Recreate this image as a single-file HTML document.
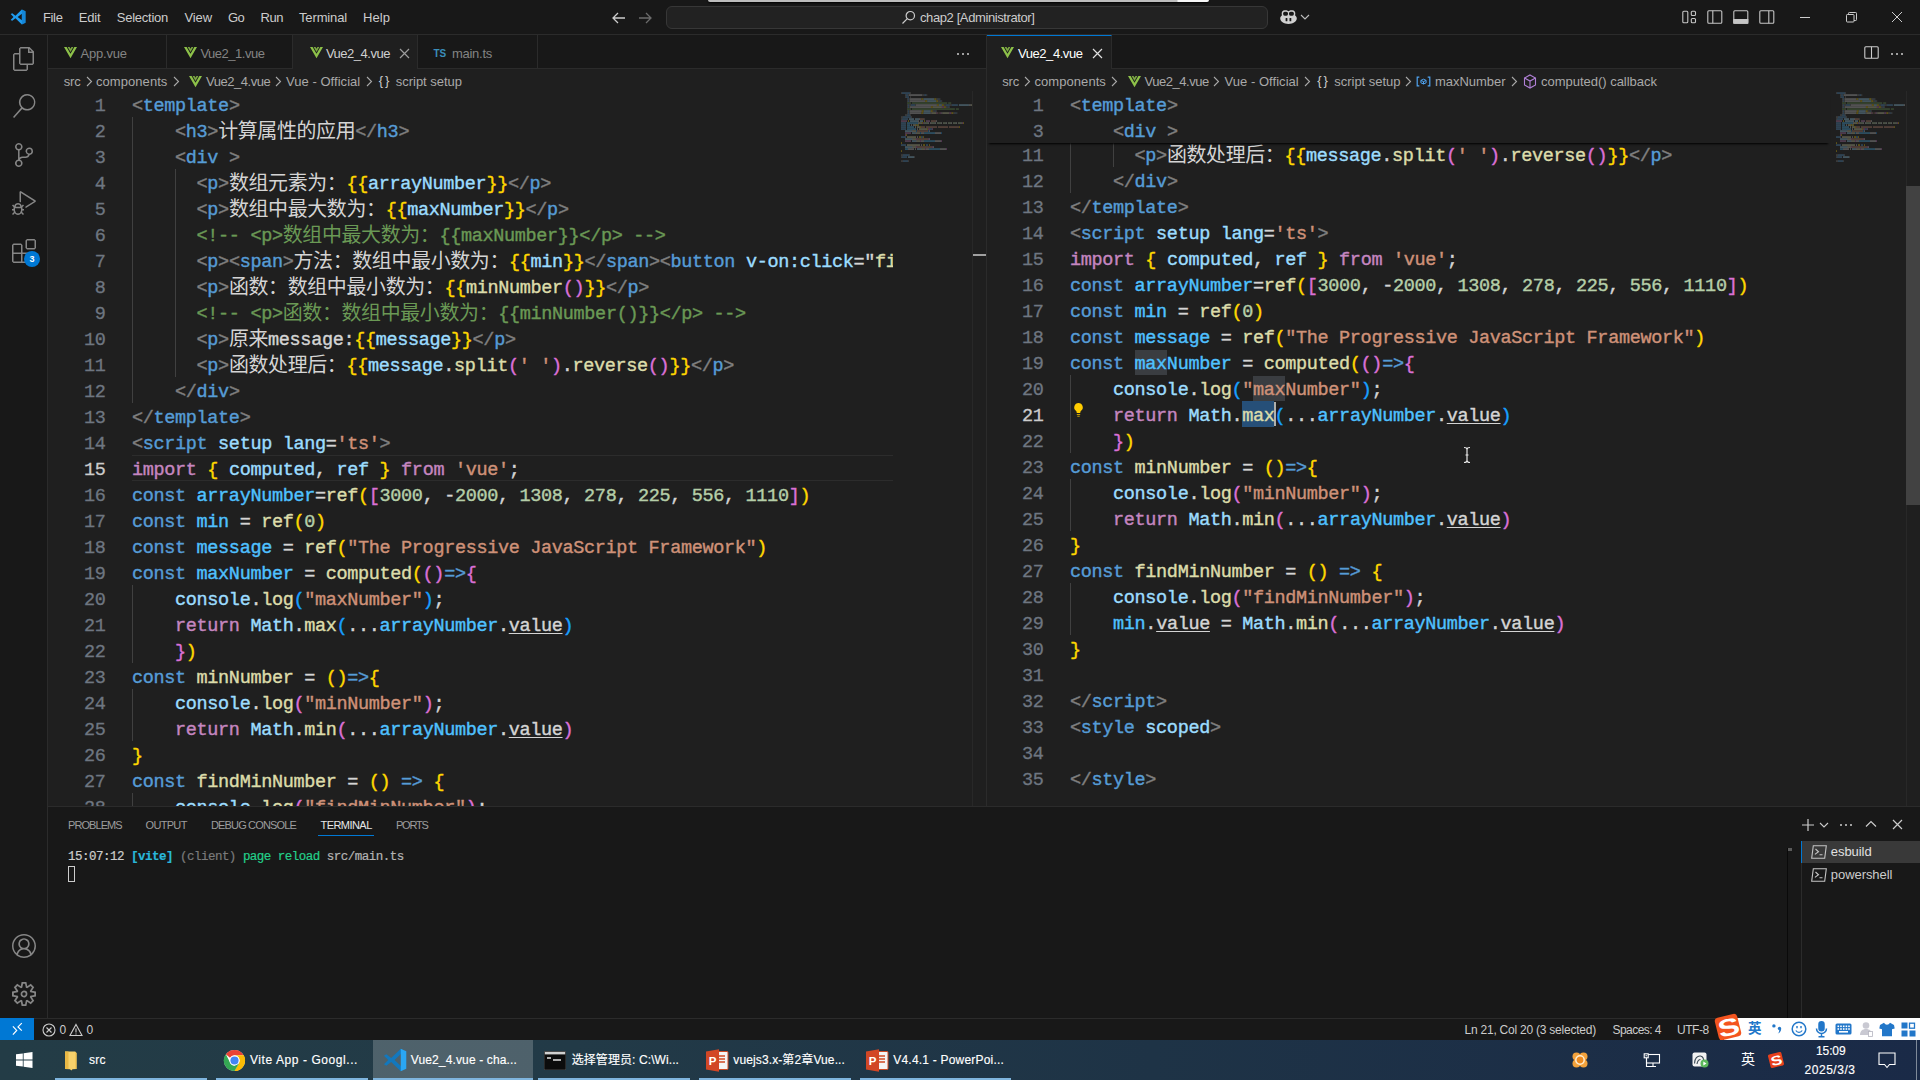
<!DOCTYPE html>
<html lang="en"><head><meta charset="utf-8"><title>Vue2_4.vue - chap2 - Visual Studio Code</title>
<style>
*{box-sizing:border-box}
html,body{margin:0;padding:0}
body{width:1920px;height:1080px;overflow:hidden;position:relative;background:#181818;font-family:"Liberation Sans","Noto Sans CJK SC",sans-serif;font-size:13px;color:#ccc}
body>div,body>svg,body>span{position:absolute}
.x{white-space:pre;display:block}
.cl{position:absolute;height:26px;line-height:31px;-webkit-text-stroke:.4px;white-space:pre;font-family:"Liberation Mono","Noto Sans CJK SC",monospace;font-size:18.5px;letter-spacing:-.34px;color:#d4d4d4}
.ln{position:absolute;height:26px;line-height:31px;-webkit-text-stroke:.3px;text-align:right;font-family:"Liberation Mono",monospace;font-size:18.5px;letter-spacing:-.34px;color:#6e7681;width:60px}
.z{font-size:19.94px;font-family:"Liberation Mono","Noto Sans CJK SC",monospace;line-height:0;position:relative;top:.5px;-webkit-text-stroke:0}
.g{color:#808080}.t{color:#569cd6}.a{color:#9cdcfe}.s{color:#ce9178}.w{color:#d4d4d4}.c{color:#6a9955}
.k{color:#c586c0}.f{color:#dcdcaa}.n{color:#b5cea8}.v{color:#4fc1ff}.y{color:#ffd700}.p{color:#da70d6}.b{color:#179fff}
.u{color:#d4d4d4;text-decoration:underline;text-underline-offset:2px}
.ed{overflow:hidden;background:#1f1f1f}
.ed>*{position:absolute}

</style></head>
<body>
<div style="left:0px;top:0px;width:1920px;height:35px;background:#181818;border-bottom:1px solid #2b2b2b;"></div>
<div style="left:708px;top:0px;width:501px;height:2px;background:linear-gradient(90deg,#bdbdbd 0,#bdbdbd 469px,#f6f6f6 470px);border-radius:0 0 3px 3px;box-shadow:0 1px 2px #000;"></div>
<svg style="left:10px;top:9px" width="16" height="16" viewBox="0 0 100 100"><path fill="#1f9cf0" fill-rule="evenodd" d="M74 3 L97 14 V86 L74 97 L34 58 L14 74 L4 68 L22 50 L4 32 L14 26 L34 42 Z M74 30 L48 50 L74 70 Z"/><path fill="#0b74c4" d="M74 3 L97 14 V86 L74 97 Z" opacity=".55"/></svg>
<span class="x" style="left:43px;top:7.5px;height:20px;line-height:20px;font-size:13px;color:#cccccc;letter-spacing:-0.363px;">File</span>
<span class="x" style="left:78.75px;top:7.5px;height:20px;line-height:20px;font-size:13px;color:#cccccc;letter-spacing:-0.164px;">Edit</span>
<span class="x" style="left:116.75px;top:7.5px;height:20px;line-height:20px;font-size:13px;color:#cccccc;letter-spacing:-0.248px;">Selection</span>
<span class="x" style="left:184.5px;top:7.5px;height:20px;line-height:20px;font-size:13px;color:#cccccc;letter-spacing:-0.113px;">View</span>
<span class="x" style="left:228px;top:7.5px;height:20px;line-height:20px;font-size:13px;color:#cccccc;letter-spacing:-0.672px;">Go</span>
<span class="x" style="left:260.5px;top:7.5px;height:20px;line-height:20px;font-size:13px;color:#cccccc;letter-spacing:-0.453px;">Run</span>
<span class="x" style="left:299px;top:7.5px;height:20px;line-height:20px;font-size:13px;color:#cccccc;letter-spacing:-0.141px;">Terminal</span>
<span class="x" style="left:363px;top:7.5px;height:20px;line-height:20px;font-size:13px;color:#cccccc;letter-spacing:0.062px;">Help</span>
<svg style="left:610px;top:9px" width="18" height="18" viewBox="0 0 18 18" fill="none" stroke="#cccccc" stroke-width="1.3"><path d="M15 9H3.5M8 4 3 9l5 5"/></svg>
<svg style="left:636px;top:9px" width="18" height="18" viewBox="0 0 18 18" fill="none" stroke="#6b6b6b" stroke-width="1.3"><path d="M3 9h11.5M10 4l5 5-5 5"/></svg>
<div style="left:666px;top:6px;width:602px;height:23px;background:#222222;border:1px solid #373737;border-radius:6px;"></div>
<svg style="left:901px;top:10px" width="15" height="15" viewBox="0 0 15 15" fill="none" stroke="#cccccc" stroke-width="1.2"><circle cx="9.3" cy="5.7" r="4.2"/><path d="M6.3 8.7 1.5 13.5"/></svg>
<span class="x" style="left:920px;top:7.5px;height:20px;line-height:20px;font-size:13px;color:#cccccc;letter-spacing:-0.397px;">chap2 [Administrator]</span>
<svg style="left:1280px;top:10px" width="17" height="14" viewBox="0 0 17 14"><path fill="#d0d0d0" d="M8.500 1.300C7.700.4 6.300 0 4.600.2 2.700.4 1.700 1.600 1.700 3.500c0 .7.100 1.200.3 1.700C.9 6.100.2 7.200.2 8.500.2 11.500 3.900 13.900 8.500 13.900s8.300-2.400 8.300-5.400c0-1.300-.7-2.400-1.800-3.300.2-.5.300-1 .3-1.700 0-1.900-1-3.100-2.900-3.300C10.700 0 9.300.4 8.500 1.300z"/><rect x="3.100" y="1.800" width="4.900" height="3.900" rx="1.600" fill="#181818"/><rect x="9" y="1.800" width="4.900" height="3.900" rx="1.600" fill="#181818"/><rect x="5.600" y="8.100" width="1.800" height="3.200" rx=".5" fill="#181818"/><rect x="9.500" y="8.100" width="1.800" height="3.200" rx=".5" fill="#181818"/></svg>
<svg style="left:1300px;top:13px" width="10" height="8" viewBox="0 0 10 8" fill="none" stroke="#bdbdbd" stroke-width="1.1"><path d="M1 2l4 4 4-4"/></svg>
<svg style="left:1682px;top:10px" width="16" height="14" viewBox="0 0 16 14" fill="none" stroke="#c5c5c5" stroke-width="1.1"><rect x=".8" y="1.300" width="5" height="11.400" rx="1"/><rect x="9.300" y="1.300" width="4.200" height="4.200" rx="1"/><rect x="9.300" y="8.500" width="4.200" height="4.200" rx="1"/></svg>
<svg style="left:1707px;top:10px" width="16" height="14" viewBox="0 0 16 14" fill="none" stroke="#c5c5c5" stroke-width="1.1"><rect x=".8" y=".8" width="14" height="12.400" rx="1"/><path d="M5.800.8v12.400"/></svg>
<svg style="left:1733px;top:10px" width="16" height="14" viewBox="0 0 16 14" fill="none" stroke="#c5c5c5" stroke-width="1.1"><rect x=".8" y=".8" width="14" height="12.400" rx="1"/><path d="M.8 9.500h14v3.700H.8z" fill="#c5c5c5"/></svg>
<svg style="left:1759px;top:10px" width="16" height="14" viewBox="0 0 16 14" fill="none" stroke="#c5c5c5" stroke-width="1.1"><rect x=".8" y=".8" width="14" height="12.400" rx="1"/><path d="M9.800.8v12.400"/></svg>
<div style="left:1800px;top:17px;width:10px;height:1px;background:#cccccc;"></div>
<svg style="left:1845.500px;top:11.500px" width="11" height="11" viewBox="0 0 11 11" fill="none" stroke="#cccccc" stroke-width="1"><rect x=".5" y="2.500" width="7.500" height="7.500" rx=".8"/><path d="M2.500 2.500V1.300a.8.800 0 0 1 .8-.8h6.400a.8.800 0 0 1 .8.800v6.400a.8.800 0 0 1-.8.800H8"/></svg>
<svg style="left:1891px;top:11px" width="12" height="12" viewBox="0 0 12 12" fill="none" stroke="#cccccc" stroke-width="1"><path d="M1 1l10 10M11 1 1 11"/></svg>
<div style="left:0px;top:35px;width:48px;height:983px;background:#181818;border-right:1px solid #2b2b2b;"></div>
<svg style="left:12px;top:47px" width="24" height="24" viewBox="0 0 24 24" fill="#868686"><path d="M17.500 0h-9L7 1.500V6H2.500L1 7.500v15.070L2.500 24h12.070L16 22.570V18h4.700l1.300-1.430V4.500L17.500 0zm0 2.120l2.380 2.380H17.500V2.120zm-3 20.380h-12v-15H7v9.070L8.500 18h6v4.500zm6-6h-12v-15H16V6h4.500v10.500z"/></svg>
<svg style="left:12px;top:94px" width="24" height="24" viewBox="0 0 24 24" fill="#868686"><path d="M15.250 0a8.250 8.250 0 0 0-6.180 13.720L1 22.880l1.120 1.120 8.050-9.120A8.251 8.251 0 1 0 15.250.01V0zm0 15a6.750 6.750 0 1 1 0-13.500 6.750 6.750 0 0 1 0 13.500z"/></svg>
<svg style="left:12px;top:143px" width="24" height="24" viewBox="0 0 24 24" fill="#868686"><path d="M21.007 8.222A3.738 3.738 0 0 0 15.045 5.200a3.737 3.737 0 0 0 1.156 6.583 2.988 2.988 0 0 1-2.668 1.670h-2.990a4.456 4.456 0 0 0-2.989 1.165V7.400a3.737 3.737 0 1 0-1.494 0v9.117a3.776 3.776 0 1 0 1.816.099 2.990 2.990 0 0 1 2.668-1.667h2.990a4.484 4.484 0 0 0 4.223-3.039 3.736 3.736 0 0 0 3.250-3.687zM4.565 3.738a2.242 2.242 0 1 1 4.484 0 2.242 2.242 0 0 1-4.484 0zm4.484 16.441a2.242 2.242 0 1 1-4.484 0 2.242 2.242 0 0 1 4.484 0zm8.221-9.715a2.242 2.242 0 1 1 0-4.485 2.242 2.242 0 0 1 0 4.485z"/></svg>
<svg style="left:12px;top:191px" width="24" height="24" viewBox="0 0 24 24" fill="#868686"><path d="M10.940 13.500l-1.320 1.320a3.730 3.730 0 0 0-7.240 0L1.060 13.500 0 14.560l1.720 1.720-.22.220V18H0v1.500h1.500v.080c.077.489.214.966.410 1.420L0 22.940 1.060 24l1.650-1.650A4.308 4.308 0 0 0 6 24a4.310 4.310 0 0 0 3.290-1.650L10.940 24 12 22.940 10.090 21c.198-.464.336-.951.410-1.450v-.1H12V18h-1.500v-1.500l-.22-.22L12 14.560l-1.060-1.060zM6 13.500a2.250 2.250 0 0 1 2.250 2.250h-4.500A2.250 2.250 0 0 1 6 13.500zm3 6a3.330 3.330 0 0 1-3 3 3.330 3.330 0 0 1-3-3v-2.250h6v2.250zm14.760-9.900v1.260L13.500 17.370V15.600l8.500-5.370L9 2v9.460a5.070 5.070 0 0 0-1.500-.72V.63L8.640 0l15.120 9.600z"/></svg>
<svg style="left:12px;top:239px" width="24" height="24" viewBox="0 0 24 24" fill="#868686"><path d="M13.500 1.500L15 0h7.500L24 1.500V9l-1.500 1.500H15L13.500 9V1.500zm1.500 0V9h7.500V1.500H15zM0 15V6l1.500-1.500H9L10.500 6v7.500H18l1.500 1.500v7.500L18 24H1.500L0 22.500V15zm9-1.500V6H1.500v7.500H9zM9 15H1.500v7.500H9V15zm1.500 7.500H18V15h-7.500v7.500z"/></svg>
<div style="left:24px;top:251px;width:16px;height:16px;background:#0078d4;border-radius:8px;"></div>
<span class="x" style="left:29.5px;top:252.0px;height:14px;line-height:14px;font-size:9px;color:#ffffff;font-weight:bold;">3</span>
<svg style="left:12px;top:934px" width="24" height="24" viewBox="0 0 16 16" fill="#868686"><path d="M16 7.992C16 3.580 12.416 0 8 0S0 3.580 0 7.992c0 2.430 1.104 4.620 2.832 6.090.016.016.032.016.032.032.144.112.288.224.448.336.080.048.144.111.224.175A7.980 7.980 0 0 0 8.016 16a7.980 7.980 0 0 0 4.480-1.375c.080-.048.144-.111.224-.160.144-.111.304-.223.448-.335.016-.016.032-.016.032-.032 1.696-1.487 2.800-3.676 2.800-6.106zm-8 7.001c-1.504 0-2.880-.480-4.016-1.279.016-.128.048-.255.080-.383a4.170 4.170 0 0 1 .416-.991c.176-.304.384-.576.640-.816.240-.240.528-.463.816-.639.304-.176.624-.304.976-.400A4.150 4.150 0 0 1 8 10.342a4.185 4.185 0 0 1 2.928 1.166c.368.368.656.800.864 1.295.112.288.192.592.240.911A7.030 7.030 0 0 1 8 14.993zm-2.448-7.400a2.490 2.490 0 0 1-.208-1.024c0-.351.064-.703.208-1.023.144-.320.336-.607.576-.847.240-.240.528-.431.848-.575.320-.144.672-.208 1.024-.208.368 0 .704.064 1.024.208.320.144.608.336.848.575.240.240.432.528.576.847.144.320.208.672.208 1.023 0 .368-.064.704-.208 1.023a2.840 2.840 0 0 1-.576.848 2.840 2.840 0 0 1-.848.575 2.715 2.715 0 0 1-2.064 0 2.840 2.840 0 0 1-.848-.575 2.526 2.526 0 0 1-.560-.848zm7.424 5.306c0-.032-.016-.048-.016-.080a5.220 5.220 0 0 0-.688-1.406 4.883 4.883 0 0 0-1.088-1.135 5.207 5.207 0 0 0-1.040-.608 2.820 2.820 0 0 0 .464-.383 4.200 4.200 0 0 0 .624-.784 3.624 3.624 0 0 0 .528-1.934 3.710 3.710 0 0 0-.288-1.470 3.799 3.799 0 0 0-.816-1.199 3.845 3.845 0 0 0-1.200-.800 3.720 3.720 0 0 0-1.472-.287 3.720 3.720 0 0 0-1.472.288 3.631 3.631 0 0 0-1.200.815 3.840 3.840 0 0 0-.800 1.199 3.710 3.710 0 0 0-.288 1.470c0 .352.048.688.144 1.007.096.336.224.640.400.927.160.288.384.544.624.784.144.144.304.271.480.383a5.120 5.120 0 0 0-1.040.624c-.416.320-.784.703-1.088 1.119a4.999 4.999 0 0 0-.688 1.406c-.016.032-.016.064-.016.080C1.776 11.636.992 9.910.992 7.992.992 4.140 4.144.991 8 .991s7.008 3.149 7.008 7.001a6.960 6.960 0 0 1-2.032 4.907z"/></svg>
<svg style="left:12px;top:982px" width="24" height="24" viewBox="0 0 24 24" fill="#868686" fill-rule="evenodd"><path d="M19.850 8.750l4.150.830v4.840l-4.150.830 2.350 3.520-3.430 3.430-3.520-2.350-.830 4.150H9.580l-.830-4.150-3.520 2.350-3.430-3.430 2.350-3.520L0 14.420V9.580l4.150-.830L1.800 5.230 5.230 1.800l3.520 2.350L9.580 0h4.840l.830 4.150 3.520-2.350 3.430 3.430-2.350 3.520zm-1.570 5.070l4-.810v-2l-4-.810-.540-1.300 2.290-3.430-1.430-1.430-3.430 2.290-1.300-.540-.810-4h-2l-.810 4-1.300.540-3.430-2.290-1.430 1.430L6.380 8.900l-.540 1.300-4 .810v2l4 .810.540 1.300-2.290 3.430 1.430 1.430 3.430-2.290 1.300.540.810 4h2l.810-4 1.300-.540 3.430 2.290 1.430-1.430-2.290-3.430.540-1.300zm-8.186-4.672A3.430 3.430 0 0 1 12 8.570 3.440 3.440 0 0 1 15.430 12a3.430 3.430 0 1 1-5.336-2.852zm.956 4.274c.281.188.612.288.950.288A1.700 1.700 0 0 0 13.710 12a1.710 1.710 0 1 0-2.660 1.422z"/></svg>
<div style="left:48px;top:35px;width:938px;height:34px;background:#181818;border-bottom:1px solid #2b2b2b;"></div>
<div style="left:48px;top:35px;width:119px;height:34px;background:#181818;border-right:1px solid #2b2b2b;border-bottom:1px solid #2b2b2b;"></div>
<svg style="left:63.5px;top:46px" width="13" height="13" viewBox="0 0 24 22"><path fill="#8dc149" d="M0 1h4.800L12 13.500 19.200 1H24L12 21.500z"/><path fill="#8dc149" d="M6.800 1h3.400L12 4.300 13.800 1h3.400L12 10z" opacity=".85"/></svg>
<span class="x" style="left:80.6px;top:43.5px;height:20px;line-height:20px;font-size:13px;color:#848484;letter-spacing:-0.229px;">App.vue</span>
<div style="left:167px;top:35px;width:126px;height:34px;background:#181818;border-right:1px solid #2b2b2b;border-bottom:1px solid #2b2b2b;"></div>
<svg style="left:183.5px;top:46px" width="13" height="13" viewBox="0 0 24 22"><path fill="#8dc149" d="M0 1h4.800L12 13.500 19.200 1H24L12 21.500z"/><path fill="#8dc149" d="M6.800 1h3.400L12 4.300 13.800 1h3.400L12 10z" opacity=".85"/></svg>
<span class="x" style="left:200.4px;top:43.5px;height:20px;line-height:20px;font-size:13px;color:#848484;letter-spacing:-0.492px;">Vue2_1.vue</span>
<div style="left:293px;top:35px;width:125px;height:34px;background:#1f1f1f;border-right:1px solid #2b2b2b;"></div>
<svg style="left:309.5px;top:46px" width="13" height="13" viewBox="0 0 24 22"><path fill="#8dc149" d="M0 1h4.800L12 13.500 19.200 1H24L12 21.500z"/><path fill="#8dc149" d="M6.800 1h3.400L12 4.300 13.800 1h3.400L12 10z" opacity=".85"/></svg>
<span class="x" style="left:325.9px;top:43.5px;height:20px;line-height:20px;font-size:13px;color:#cfcfcf;letter-spacing:-0.482px;">Vue2_4.vue</span>
<div style="left:418px;top:35px;width:120px;height:34px;background:#181818;border-right:1px solid #2b2b2b;border-bottom:1px solid #2b2b2b;"></div>
<span class="x" style="left:451.9px;top:43.5px;height:20px;line-height:20px;font-size:13px;color:#848484;letter-spacing:-0.258px;">main.ts</span>
<svg style="left:399px;top:48px" width="11" height="11" viewBox="0 0 11 11" fill="none" stroke="#9d9d9d" stroke-width="1.2"><path d="M1 1l9 9M10 1 1 10"/></svg>
<span class="x" style="left:433.5px;top:45.5px;height:15px;line-height:15px;font-size:10px;color:#3b8eba;font-weight:bold;letter-spacing:-0.141px;">TS</span>
<div style="left:957px;top:52.5px;width:2px;height:2px;background:#cccccc;border-radius:1px;"></div>
<div style="left:962px;top:52.5px;width:2px;height:2px;background:#cccccc;border-radius:1px;"></div>
<div style="left:967px;top:52.5px;width:2px;height:2px;background:#cccccc;border-radius:1px;"></div>
<div style="left:986px;top:35px;width:1px;height:771px;background:#2b2b2b;"></div>
<div style="left:987px;top:35px;width:933px;height:34px;background:#181818;border-bottom:1px solid #2b2b2b;"></div>
<div style="left:987px;top:35px;width:125px;height:34px;background:#1f1f1f;border-top:1px solid #0078d4;border-right:1px solid #2b2b2b;"></div>
<svg style="left:1001.3px;top:45.7px" width="13" height="13" viewBox="0 0 24 22"><path fill="#8dc149" d="M0 1h4.800L12 13.500 19.200 1H24L12 21.500z"/><path fill="#8dc149" d="M6.800 1h3.400L12 4.300 13.800 1h3.400L12 10z" opacity=".85"/></svg>
<span class="x" style="left:1018px;top:43.5px;height:20px;line-height:20px;font-size:13px;color:#ffffff;letter-spacing:-0.442px;">Vue2_4.vue</span>
<svg style="left:1091.5px;top:48px" width="11" height="11" viewBox="0 0 11 11" fill="none" stroke="#e0e0e0" stroke-width="1.2"><path d="M1 1l9 9M10 1 1 10"/></svg>
<svg style="left:1864px;top:46px" width="15" height="13" viewBox="0 0 15 13" fill="none" stroke="#cccccc" stroke-width="1.1"><rect x=".8" y=".8" width="13.400" height="11.400" rx="1"/><path d="M7.500.8v11.400"/></svg>
<div style="left:1891px;top:52.5px;width:2px;height:2px;background:#cccccc;border-radius:1px;"></div>
<div style="left:1896px;top:52.5px;width:2px;height:2px;background:#cccccc;border-radius:1px;"></div>
<div style="left:1901px;top:52.5px;width:2px;height:2px;background:#cccccc;border-radius:1px;"></div>
<div style="left:48px;top:69px;width:938px;height:22px;background:#1f1f1f;"></div>
<div style="left:987px;top:69px;width:933px;height:22px;background:#1f1f1f;"></div>
<span class="x" style="left:63.8px;top:71.5px;height:20px;line-height:20px;font-size:13px;color:#a9a9a9;letter-spacing:-0.181px;">src</span>
<svg style="left:85.5px;top:76px" width="7" height="11" viewBox="0 0 7 11" fill="none" stroke="#a9a9a9" stroke-width="1.1"><path d="M1 1l4.500 4.500L1 10"/></svg>
<span class="x" style="left:96px;top:71.5px;height:20px;line-height:20px;font-size:13px;color:#a9a9a9;letter-spacing:0.057px;">components</span>
<svg style="left:172.5px;top:76px" width="7" height="11" viewBox="0 0 7 11" fill="none" stroke="#a9a9a9" stroke-width="1.1"><path d="M1 1l4.500 4.500L1 10"/></svg>
<svg style="left:189px;top:75px" width="13" height="13" viewBox="0 0 24 22"><path fill="#8dc149" d="M0 1h4.800L12 13.500 19.200 1H24L12 21.500z"/><path fill="#8dc149" d="M6.800 1h3.400L12 4.300 13.800 1h3.400L12 10z" opacity=".85"/></svg>
<span class="x" style="left:205.9px;top:71.5px;height:20px;line-height:20px;font-size:13px;color:#a9a9a9;letter-spacing:-0.442px;">Vue2_4.vue</span>
<svg style="left:274.5px;top:76px" width="7" height="11" viewBox="0 0 7 11" fill="none" stroke="#a9a9a9" stroke-width="1.1"><path d="M1 1l4.500 4.500L1 10"/></svg>
<span class="x" style="left:286px;top:71.5px;height:20px;line-height:20px;font-size:13px;color:#a9a9a9;letter-spacing:0.043px;">Vue - Official</span>
<svg style="left:365.5px;top:76px" width="7" height="11" viewBox="0 0 7 11" fill="none" stroke="#a9a9a9" stroke-width="1.1"><path d="M1 1l4.500 4.500L1 10"/></svg>
<span class="x" style="left:378.8px;top:71.0px;height:20px;line-height:20px;font-size:13px;color:#cccccc;letter-spacing:1.756px;">{}</span>
<span class="x" style="left:395.8px;top:71.5px;height:20px;line-height:20px;font-size:13px;color:#a9a9a9;letter-spacing:-0.024px;">script setup</span>
<span class="x" style="left:1002.3px;top:71.5px;height:20px;line-height:20px;font-size:13px;color:#a9a9a9;letter-spacing:-0.181px;">src</span>
<svg style="left:1024.0px;top:76px" width="7" height="11" viewBox="0 0 7 11" fill="none" stroke="#a9a9a9" stroke-width="1.1"><path d="M1 1l4.500 4.500L1 10"/></svg>
<span class="x" style="left:1034.5px;top:71.5px;height:20px;line-height:20px;font-size:13px;color:#a9a9a9;letter-spacing:0.057px;">components</span>
<svg style="left:1111.0px;top:76px" width="7" height="11" viewBox="0 0 7 11" fill="none" stroke="#a9a9a9" stroke-width="1.1"><path d="M1 1l4.500 4.500L1 10"/></svg>
<svg style="left:1127.5px;top:75px" width="13" height="13" viewBox="0 0 24 22"><path fill="#8dc149" d="M0 1h4.800L12 13.500 19.200 1H24L12 21.500z"/><path fill="#8dc149" d="M6.800 1h3.400L12 4.300 13.800 1h3.400L12 10z" opacity=".85"/></svg>
<span class="x" style="left:1144.4px;top:71.5px;height:20px;line-height:20px;font-size:13px;color:#a9a9a9;letter-spacing:-0.442px;">Vue2_4.vue</span>
<svg style="left:1213.0px;top:76px" width="7" height="11" viewBox="0 0 7 11" fill="none" stroke="#a9a9a9" stroke-width="1.1"><path d="M1 1l4.500 4.500L1 10"/></svg>
<span class="x" style="left:1224.5px;top:71.5px;height:20px;line-height:20px;font-size:13px;color:#a9a9a9;letter-spacing:0.043px;">Vue - Official</span>
<svg style="left:1304.0px;top:76px" width="7" height="11" viewBox="0 0 7 11" fill="none" stroke="#a9a9a9" stroke-width="1.1"><path d="M1 1l4.500 4.500L1 10"/></svg>
<span class="x" style="left:1317.3px;top:71.0px;height:20px;line-height:20px;font-size:13px;color:#cccccc;letter-spacing:1.756px;">{}</span>
<span class="x" style="left:1334.3px;top:71.5px;height:20px;line-height:20px;font-size:13px;color:#a9a9a9;letter-spacing:-0.024px;">script setup</span>
<svg style="left:1404.5px;top:76px" width="7" height="11" viewBox="0 0 7 11" fill="none" stroke="#a9a9a9" stroke-width="1.1"><path d="M1 1l4.500 4.500L1 10"/></svg>
<svg style="left:1416px;top:75px" width="15" height="13" viewBox="0 0 15 13" fill="none" stroke="#4fa3f0" stroke-width="1.200"><path d="M3.300 2.200H1.200v8.600h2.100M11.700 2.200h2.100v8.600h-2.100"/><path d="M7.500 4.200l2.600 1.200v2.400L7.500 9 4.900 7.800V5.400z M4.900 5.400l2.600 1.200 2.600-1.200M7.500 6.600V9" stroke-width="1"/></svg>
<span class="x" style="left:1435px;top:71.5px;height:20px;line-height:20px;font-size:13px;color:#a9a9a9;letter-spacing:-0.033px;">maxNumber</span>
<svg style="left:1510.5px;top:76px" width="7" height="11" viewBox="0 0 7 11" fill="none" stroke="#a9a9a9" stroke-width="1.1"><path d="M1 1l4.500 4.500L1 10"/></svg>
<svg style="left:1523px;top:74px" width="14" height="15" viewBox="0 0 14 15" fill="none" stroke="#b180d7" stroke-width="1.1"><path d="M7 1l5.500 3v7L7 14l-5.500-3V4z"/><path d="M1.500 4 7 7l5.500-3M7 7v7"/></svg>
<span class="x" style="left:1541px;top:71.5px;height:20px;line-height:20px;font-size:13px;color:#a9a9a9;letter-spacing:-0.017px;">computed() callback</span>
<div class="ed" style="left:48px;top:91px;width:845px;height:715px">
<div style="left:84px;top:364px;width:761px;height:26px;border-top:1px solid #2c2c2c;border-bottom:1px solid #2c2c2c"></div>
<div style="left:84px;top:26px;width:1px;height:286px;background:#404040"></div>
<div style="left:127px;top:78px;width:1px;height:208px;background:#404040"></div>
<div style="left:84px;top:494px;width:1px;height:78px;background:#404040"></div>
<div style="left:84px;top:598px;width:1px;height:52px;background:#404040"></div>
<div style="left:84px;top:702px;width:1px;height:52px;background:#404040"></div>
<div class="ln" style="left:-2.5px;top:0px">1</div>
<div class="cl" style="left:84px;top:0px"><span class="g">&lt;</span><span class="t">template</span><span class="g">&gt;</span></div>
<div class="ln" style="left:-2.5px;top:26px">2</div>
<div class="cl" style="left:84px;top:26px">    <span class="g">&lt;</span><span class="t">h3</span><span class="g">&gt;</span><span class="z">计算属性的应用</span><span class="g">&lt;/</span><span class="t">h3</span><span class="g">&gt;</span></div>
<div class="ln" style="left:-2.5px;top:52px">3</div>
<div class="cl" style="left:84px;top:52px">    <span class="g">&lt;</span><span class="t">div</span> <span class="g">&gt;</span></div>
<div class="ln" style="left:-2.5px;top:78px">4</div>
<div class="cl" style="left:84px;top:78px">      <span class="g">&lt;</span><span class="t">p</span><span class="g">&gt;</span><span class="z">数组元素为：</span><span class="y">{{</span><span class="a">arrayNumber</span><span class="y">}}</span><span class="g">&lt;/</span><span class="t">p</span><span class="g">&gt;</span></div>
<div class="ln" style="left:-2.5px;top:104px">5</div>
<div class="cl" style="left:84px;top:104px">      <span class="g">&lt;</span><span class="t">p</span><span class="g">&gt;</span><span class="z">数组中最大数为：</span><span class="y">{{</span><span class="a">maxNumber</span><span class="y">}}</span><span class="g">&lt;/</span><span class="t">p</span><span class="g">&gt;</span></div>
<div class="ln" style="left:-2.5px;top:130px">6</div>
<div class="cl" style="left:84px;top:130px">      <span class="c">&lt;!-- &lt;p&gt;<span class="z">数组中最大数为：</span>{{maxNumber}}&lt;/p&gt; --&gt;</span></div>
<div class="ln" style="left:-2.5px;top:156px">7</div>
<div class="cl" style="left:84px;top:156px">      <span class="g">&lt;</span><span class="t">p</span><span class="g">&gt;</span><span class="g">&lt;</span><span class="t">span</span><span class="g">&gt;</span><span class="z">方法：数组中最小数为：</span><span class="y">{{</span><span class="a">min</span><span class="y">}}</span><span class="g">&lt;/</span><span class="t">span</span><span class="g">&gt;</span><span class="g">&lt;</span><span class="t">button</span> <span class="a">v-on:click</span>="<span class="f">findMinNumber</span>"&gt;</div>
<div class="ln" style="left:-2.5px;top:182px">8</div>
<div class="cl" style="left:84px;top:182px">      <span class="g">&lt;</span><span class="t">p</span><span class="g">&gt;</span><span class="z">函数：数组中最小数为：</span><span class="y">{{</span><span class="f">minNumber</span><span class="p">()</span><span class="y">}}</span><span class="g">&lt;/</span><span class="t">p</span><span class="g">&gt;</span></div>
<div class="ln" style="left:-2.5px;top:208px">9</div>
<div class="cl" style="left:84px;top:208px">      <span class="c">&lt;!-- &lt;p&gt;<span class="z">函数：数组中最小数为：</span>{{minNumber()}}&lt;/p&gt; --&gt;</span></div>
<div class="ln" style="left:-2.5px;top:234px">10</div>
<div class="cl" style="left:84px;top:234px">      <span class="g">&lt;</span><span class="t">p</span><span class="g">&gt;</span><span class="z">原来</span>message:<span class="y">{{</span><span class="a">message</span><span class="y">}}</span><span class="g">&lt;/</span><span class="t">p</span><span class="g">&gt;</span></div>
<div class="ln" style="left:-2.5px;top:260px">11</div>
<div class="cl" style="left:84px;top:260px">      <span class="g">&lt;</span><span class="t">p</span><span class="g">&gt;</span><span class="z">函数处理后：</span><span class="y">{{</span><span class="a">message</span>.<span class="f">split</span><span class="p">(</span><span class="s">' '</span><span class="p">)</span>.<span class="f">reverse</span><span class="p">()</span><span class="y">}}</span><span class="g">&lt;/</span><span class="t">p</span><span class="g">&gt;</span></div>
<div class="ln" style="left:-2.5px;top:286px">12</div>
<div class="cl" style="left:84px;top:286px">    <span class="g">&lt;/</span><span class="t">div</span><span class="g">&gt;</span></div>
<div class="ln" style="left:-2.5px;top:312px">13</div>
<div class="cl" style="left:84px;top:312px"><span class="g">&lt;/</span><span class="t">template</span><span class="g">&gt;</span></div>
<div class="ln" style="left:-2.5px;top:338px">14</div>
<div class="cl" style="left:84px;top:338px"><span class="g">&lt;</span><span class="t">script</span> <span class="a">setup</span> <span class="a">lang</span>=<span class="s">'ts'</span><span class="g">&gt;</span></div>
<div class="ln" style="left:-2.5px;top:364px;color:#cccccc">15</div>
<div class="cl" style="left:84px;top:364px"><span class="k">import</span> <span class="y">{</span> <span class="a">computed</span>, <span class="a">ref</span> <span class="y">}</span> <span class="k">from</span> <span class="s">'vue'</span>;</div>
<div class="ln" style="left:-2.5px;top:390px">16</div>
<div class="cl" style="left:84px;top:390px"><span class="t">const</span> <span class="v">arrayNumber</span>=<span class="f">ref</span><span class="y">(</span><span class="p">[</span><span class="n">3000</span>, -<span class="n">2000</span>, <span class="n">1308</span>, <span class="n">278</span>, <span class="n">225</span>, <span class="n">556</span>, <span class="n">1110</span><span class="p">]</span><span class="y">)</span></div>
<div class="ln" style="left:-2.5px;top:416px">17</div>
<div class="cl" style="left:84px;top:416px"><span class="t">const</span> <span class="v">min</span> = <span class="f">ref</span><span class="y">(</span><span class="n">0</span><span class="y">)</span></div>
<div class="ln" style="left:-2.5px;top:442px">18</div>
<div class="cl" style="left:84px;top:442px"><span class="t">const</span> <span class="v">message</span> = <span class="f">ref</span><span class="y">(</span><span class="s">"The Progressive JavaScript Framework"</span><span class="y">)</span></div>
<div class="ln" style="left:-2.5px;top:468px">19</div>
<div class="cl" style="left:84px;top:468px"><span class="t">const</span> <span class="v">maxNumber</span> = <span class="f">computed</span><span class="y">(</span><span class="p">()</span><span class="t">=&gt;</span><span class="p">{</span></div>
<div class="ln" style="left:-2.5px;top:494px">20</div>
<div class="cl" style="left:84px;top:494px">    <span class="a">console</span>.<span class="f">log</span><span class="b">(</span><span class="s">"maxNumber"</span><span class="b">)</span>;</div>
<div class="ln" style="left:-2.5px;top:520px">21</div>
<div class="cl" style="left:84px;top:520px">    <span class="k">return</span> <span class="a">Math</span>.<span class="f">max</span><span class="b">(</span>...<span class="v">arrayNumber</span>.<span class="u">value</span><span class="b">)</span></div>
<div class="ln" style="left:-2.5px;top:546px">22</div>
<div class="cl" style="left:84px;top:546px">    <span class="p">}</span><span class="y">)</span></div>
<div class="ln" style="left:-2.5px;top:572px">23</div>
<div class="cl" style="left:84px;top:572px"><span class="t">const</span> <span class="f">minNumber</span> = <span class="y">()</span><span class="t">=&gt;</span><span class="y">{</span></div>
<div class="ln" style="left:-2.5px;top:598px">24</div>
<div class="cl" style="left:84px;top:598px">    <span class="a">console</span>.<span class="f">log</span><span class="p">(</span><span class="s">"minNumber"</span><span class="p">)</span>;</div>
<div class="ln" style="left:-2.5px;top:624px">25</div>
<div class="cl" style="left:84px;top:624px">    <span class="k">return</span> <span class="a">Math</span>.<span class="f">min</span><span class="p">(</span>...<span class="v">arrayNumber</span>.<span class="u">value</span><span class="p">)</span></div>
<div class="ln" style="left:-2.5px;top:650px">26</div>
<div class="cl" style="left:84px;top:650px"><span class="y">}</span></div>
<div class="ln" style="left:-2.5px;top:676px">27</div>
<div class="cl" style="left:84px;top:676px"><span class="t">const</span> <span class="f">findMinNumber</span> = <span class="y">()</span> <span class="t">=&gt;</span> <span class="y">{</span></div>
<div class="ln" style="left:-2.5px;top:702px">28</div>
<div class="cl" style="left:84px;top:702px">    <span class="a">console</span>.<span class="f">log</span><span class="p">(</span><span class="s">"findMinNumber"</span><span class="p">)</span>;</div>
</div>
<div style="left:893px;top:91px;width:93px;height:715px;background:#1f1f1f;"></div>
<div class="ed" style="left:987px;top:91px;width:843px;height:715px">
<div style="left:147.6px;top:259px;width:32.3px;height:25px;background:#3a3d41"></div><div style="left:265.9px;top:285px;width:32.3px;height:25px;background:#3a3d41"></div><div style="left:255.2px;top:310px;width:32.3px;height:26px;background:#264f78"></div><div style="left:287.4px;top:311px;width:2px;height:24px;background:#aeafad"></div>
<div style="left:83px;top:50px;width:1px;height:52px;background:#404040"></div>
<div style="left:126px;top:50px;width:1px;height:26px;background:#404040"></div>
<div style="left:83px;top:284px;width:1px;height:78px;background:#404040"></div>
<div style="left:83px;top:388px;width:1px;height:52px;background:#404040"></div>
<div style="left:83px;top:492px;width:1px;height:52px;background:#404040"></div>
<div class="ln" style="left:-3.5px;top:50px">11</div>
<div class="cl" style="left:83px;top:50px">      <span class="g">&lt;</span><span class="t">p</span><span class="g">&gt;</span><span class="z">函数处理后：</span><span class="y">{{</span><span class="a">message</span>.<span class="f">split</span><span class="p">(</span><span class="s">' '</span><span class="p">)</span>.<span class="f">reverse</span><span class="p">()</span><span class="y">}}</span><span class="g">&lt;/</span><span class="t">p</span><span class="g">&gt;</span></div>
<div class="ln" style="left:-3.5px;top:76px">12</div>
<div class="cl" style="left:83px;top:76px">    <span class="g">&lt;/</span><span class="t">div</span><span class="g">&gt;</span></div>
<div class="ln" style="left:-3.5px;top:102px">13</div>
<div class="cl" style="left:83px;top:102px"><span class="g">&lt;/</span><span class="t">template</span><span class="g">&gt;</span></div>
<div class="ln" style="left:-3.5px;top:128px">14</div>
<div class="cl" style="left:83px;top:128px"><span class="g">&lt;</span><span class="t">script</span> <span class="a">setup</span> <span class="a">lang</span>=<span class="s">'ts'</span><span class="g">&gt;</span></div>
<div class="ln" style="left:-3.5px;top:154px">15</div>
<div class="cl" style="left:83px;top:154px"><span class="k">import</span> <span class="y">{</span> <span class="a">computed</span>, <span class="a">ref</span> <span class="y">}</span> <span class="k">from</span> <span class="s">'vue'</span>;</div>
<div class="ln" style="left:-3.5px;top:180px">16</div>
<div class="cl" style="left:83px;top:180px"><span class="t">const</span> <span class="v">arrayNumber</span>=<span class="f">ref</span><span class="y">(</span><span class="p">[</span><span class="n">3000</span>, -<span class="n">2000</span>, <span class="n">1308</span>, <span class="n">278</span>, <span class="n">225</span>, <span class="n">556</span>, <span class="n">1110</span><span class="p">]</span><span class="y">)</span></div>
<div class="ln" style="left:-3.5px;top:206px">17</div>
<div class="cl" style="left:83px;top:206px"><span class="t">const</span> <span class="v">min</span> = <span class="f">ref</span><span class="y">(</span><span class="n">0</span><span class="y">)</span></div>
<div class="ln" style="left:-3.5px;top:232px">18</div>
<div class="cl" style="left:83px;top:232px"><span class="t">const</span> <span class="v">message</span> = <span class="f">ref</span><span class="y">(</span><span class="s">"The Progressive JavaScript Framework"</span><span class="y">)</span></div>
<div class="ln" style="left:-3.5px;top:258px">19</div>
<div class="cl" style="left:83px;top:258px"><span class="t">const</span> <span class="v">maxNumber</span> = <span class="f">computed</span><span class="y">(</span><span class="p">()</span><span class="t">=&gt;</span><span class="p">{</span></div>
<div class="ln" style="left:-3.5px;top:284px">20</div>
<div class="cl" style="left:83px;top:284px">    <span class="a">console</span>.<span class="f">log</span><span class="b">(</span><span class="s">"maxNumber"</span><span class="b">)</span>;</div>
<div class="ln" style="left:-3.5px;top:310px;color:#cccccc">21</div>
<div class="cl" style="left:83px;top:310px">    <span class="k">return</span> <span class="a">Math</span>.<span class="f">max</span><span class="b">(</span>...<span class="v">arrayNumber</span>.<span class="u">value</span><span class="b">)</span></div>
<div class="ln" style="left:-3.5px;top:336px">22</div>
<div class="cl" style="left:83px;top:336px">    <span class="p">}</span><span class="y">)</span></div>
<div class="ln" style="left:-3.5px;top:362px">23</div>
<div class="cl" style="left:83px;top:362px"><span class="t">const</span> <span class="f">minNumber</span> = <span class="y">()</span><span class="t">=&gt;</span><span class="y">{</span></div>
<div class="ln" style="left:-3.5px;top:388px">24</div>
<div class="cl" style="left:83px;top:388px">    <span class="a">console</span>.<span class="f">log</span><span class="p">(</span><span class="s">"minNumber"</span><span class="p">)</span>;</div>
<div class="ln" style="left:-3.5px;top:414px">25</div>
<div class="cl" style="left:83px;top:414px">    <span class="k">return</span> <span class="a">Math</span>.<span class="f">min</span><span class="p">(</span>...<span class="v">arrayNumber</span>.<span class="u">value</span><span class="p">)</span></div>
<div class="ln" style="left:-3.5px;top:440px">26</div>
<div class="cl" style="left:83px;top:440px"><span class="y">}</span></div>
<div class="ln" style="left:-3.5px;top:466px">27</div>
<div class="cl" style="left:83px;top:466px"><span class="t">const</span> <span class="f">findMinNumber</span> = <span class="y">()</span> <span class="t">=&gt;</span> <span class="y">{</span></div>
<div class="ln" style="left:-3.5px;top:492px">28</div>
<div class="cl" style="left:83px;top:492px">    <span class="a">console</span>.<span class="f">log</span><span class="p">(</span><span class="s">"findMinNumber"</span><span class="p">)</span>;</div>
<div class="ln" style="left:-3.5px;top:518px">29</div>
<div class="cl" style="left:83px;top:518px">    <span class="v">min</span>.<span class="u">value</span> = <span class="a">Math</span>.<span class="f">min</span><span class="p">(</span>...<span class="v">arrayNumber</span>.<span class="u">value</span><span class="p">)</span></div>
<div class="ln" style="left:-3.5px;top:544px">30</div>
<div class="cl" style="left:83px;top:544px"><span class="y">}</span></div>
<div class="ln" style="left:-3.5px;top:570px">31</div>
<div class="ln" style="left:-3.5px;top:596px">32</div>
<div class="cl" style="left:83px;top:596px"><span class="g">&lt;/</span><span class="t">script</span><span class="g">&gt;</span></div>
<div class="ln" style="left:-3.5px;top:622px">33</div>
<div class="cl" style="left:83px;top:622px"><span class="g">&lt;</span><span class="t">style</span> <span class="a">scoped</span><span class="g">&gt;</span></div>
<div class="ln" style="left:-3.5px;top:648px">34</div>
<div class="ln" style="left:-3.5px;top:674px">35</div>
<div class="cl" style="left:83px;top:674px"><span class="g">&lt;/</span><span class="t">style</span><span class="g">&gt;</span></div>
</div>
<div style="left:1830px;top:91px;width:90px;height:715px;background:#1f1f1f;"></div>
<div class="ed" style="left:987px;top:91px;width:843px;height:52px;box-shadow:0 3px 2px -2px #000"><div class="ln" style="left:-3.5px;top:0">1</div><div class="cl" style="left:83px;top:0"><span class="g">&lt;</span><span class="t">template</span><span class="g">&gt;</span></div><div class="ln" style="left:-3.5px;top:26px">3</div><div class="cl" style="left:83px;top:26px">    <span class="g">&lt;</span><span class="t">div</span> <span class="g">&gt;</span></div></div>
<svg style="left:1072px;top:401.500px" width="13" height="16" viewBox="0 0 13 16"><path fill="#ffcc00" d="M6.500 1a4.300 4.300 0 0 0-2.600 7.700c.5.500.8 1 .8 1.600V11h3.600v-.7c0-.6.300-1.100.8-1.600A4.300 4.300 0 0 0 6.500 1z"/><path fill="#c9a100" d="M4.800 12h3.400v1H4.800zM5.300 13.800h2.400v1H5.300z"/></svg>
<svg style="left:1462px;top:446px" width="10" height="18" viewBox="0 0 10 18" fill="none" stroke="#e8e8e8" stroke-width="1.2"><path d="M2 1.500c2 0 3 .8 3 2v11c0 1.200-1 2-3 2M8 1.500c-2 0-3 .8-3 2M8 16.500c-2 0-3-.8-3-2M3.500 9h3"/></svg>
<div style="left:1906px;top:91px;width:1px;height:715px;background:#282828;"></div>
<div style="left:1906px;top:186px;width:14px;height:319px;background:#424242;"></div>
<div style="left:973px;top:254px;width:13px;height:2px;background:#a0a0a0;"></div>
<div style="left:972px;top:91px;width:1px;height:715px;background:#282828;"></div>
<svg style="left:901px;top:92px" width="71" height="72" viewBox="0 0 71 72" opacity=".4"><rect x="0.0" y="0.4" width="1.0" height="1.300" fill="#808080"/><rect x="1.0" y="0.4" width="8.0" height="1.300" fill="#569cd6"/><rect x="9.0" y="0.4" width="1.0" height="1.300" fill="#808080"/><rect x="4.0" y="2.4" width="1.0" height="1.300" fill="#808080"/><rect x="5.0" y="2.4" width="2.0" height="1.300" fill="#569cd6"/><rect x="7.0" y="2.4" width="1.0" height="1.300" fill="#808080"/><rect x="8.0" y="2.4" width="13.3" height="1.300" fill="#d4d4d4"/><rect x="21.3" y="2.4" width="2.0" height="1.300" fill="#808080"/><rect x="23.3" y="2.4" width="2.0" height="1.300" fill="#569cd6"/><rect x="25.3" y="2.4" width="1.0" height="1.300" fill="#808080"/><rect x="4.0" y="4.4" width="1.0" height="1.300" fill="#808080"/><rect x="5.0" y="4.4" width="3.0" height="1.300" fill="#569cd6"/><rect x="9.0" y="4.4" width="1.0" height="1.300" fill="#808080"/><rect x="6.0" y="6.4" width="1.0" height="1.300" fill="#808080"/><rect x="7.0" y="6.4" width="1.0" height="1.300" fill="#569cd6"/><rect x="8.0" y="6.4" width="1.0" height="1.300" fill="#808080"/><rect x="9.0" y="6.4" width="11.4" height="1.300" fill="#d4d4d4"/><rect x="20.4" y="6.4" width="2.0" height="1.300" fill="#ffd700"/><rect x="22.4" y="6.4" width="11.0" height="1.300" fill="#9cdcfe"/><rect x="33.4" y="6.4" width="2.0" height="1.300" fill="#ffd700"/><rect x="35.4" y="6.4" width="2.0" height="1.300" fill="#808080"/><rect x="37.4" y="6.4" width="1.0" height="1.300" fill="#569cd6"/><rect x="38.4" y="6.4" width="1.0" height="1.300" fill="#808080"/><rect x="6.0" y="8.4" width="1.0" height="1.300" fill="#808080"/><rect x="7.0" y="8.4" width="1.0" height="1.300" fill="#569cd6"/><rect x="8.0" y="8.4" width="1.0" height="1.300" fill="#808080"/><rect x="9.0" y="8.4" width="15.2" height="1.300" fill="#d4d4d4"/><rect x="24.2" y="8.4" width="2.0" height="1.300" fill="#ffd700"/><rect x="26.2" y="8.4" width="9.0" height="1.300" fill="#9cdcfe"/><rect x="35.2" y="8.4" width="2.0" height="1.300" fill="#ffd700"/><rect x="37.2" y="8.4" width="2.0" height="1.300" fill="#808080"/><rect x="39.2" y="8.4" width="1.0" height="1.300" fill="#569cd6"/><rect x="40.2" y="8.4" width="1.0" height="1.300" fill="#808080"/><rect x="6.0" y="10.4" width="4.0" height="1.300" fill="#6a9955"/><rect x="11.0" y="10.4" width="35.2" height="1.300" fill="#6a9955"/><rect x="47.2" y="10.4" width="3.0" height="1.300" fill="#6a9955"/><rect x="6.0" y="12.4" width="1.0" height="1.300" fill="#808080"/><rect x="7.0" y="12.4" width="1.0" height="1.300" fill="#569cd6"/><rect x="8.0" y="12.4" width="1.0" height="1.300" fill="#808080"/><rect x="9.0" y="12.4" width="1.0" height="1.300" fill="#808080"/><rect x="10.0" y="12.4" width="4.0" height="1.300" fill="#569cd6"/><rect x="14.0" y="12.4" width="1.0" height="1.300" fill="#808080"/><rect x="15.0" y="12.4" width="20.9" height="1.300" fill="#d4d4d4"/><rect x="35.9" y="12.4" width="2.0" height="1.300" fill="#ffd700"/><rect x="37.9" y="12.4" width="3.0" height="1.300" fill="#9cdcfe"/><rect x="40.9" y="12.4" width="2.0" height="1.300" fill="#ffd700"/><rect x="42.9" y="12.4" width="2.0" height="1.300" fill="#808080"/><rect x="44.9" y="12.4" width="4.0" height="1.300" fill="#569cd6"/><rect x="48.9" y="12.4" width="1.0" height="1.300" fill="#808080"/><rect x="49.9" y="12.4" width="1.0" height="1.300" fill="#808080"/><rect x="50.9" y="12.4" width="6.0" height="1.300" fill="#569cd6"/><rect x="57.9" y="12.4" width="10.0" height="1.300" fill="#9cdcfe"/><rect x="67.9" y="12.4" width="2.0" height="1.300" fill="#d4d4d4"/><rect x="69.9" y="12.4" width="1.1" height="1.300" fill="#dcdcaa"/><rect x="6.0" y="14.4" width="1.0" height="1.300" fill="#808080"/><rect x="7.0" y="14.4" width="1.0" height="1.300" fill="#569cd6"/><rect x="8.0" y="14.4" width="1.0" height="1.300" fill="#808080"/><rect x="9.0" y="14.4" width="20.9" height="1.300" fill="#d4d4d4"/><rect x="29.9" y="14.4" width="2.0" height="1.300" fill="#ffd700"/><rect x="31.9" y="14.4" width="9.0" height="1.300" fill="#dcdcaa"/><rect x="40.9" y="14.4" width="2.0" height="1.300" fill="#da70d6"/><rect x="42.9" y="14.4" width="2.0" height="1.300" fill="#ffd700"/><rect x="44.9" y="14.4" width="2.0" height="1.300" fill="#808080"/><rect x="46.9" y="14.4" width="1.0" height="1.300" fill="#569cd6"/><rect x="47.9" y="14.4" width="1.0" height="1.300" fill="#808080"/><rect x="6.0" y="16.4" width="4.0" height="1.300" fill="#6a9955"/><rect x="11.0" y="16.4" width="42.9" height="1.300" fill="#6a9955"/><rect x="54.9" y="16.4" width="3.0" height="1.300" fill="#6a9955"/><rect x="6.0" y="18.4" width="1.0" height="1.300" fill="#808080"/><rect x="7.0" y="18.4" width="1.0" height="1.300" fill="#569cd6"/><rect x="8.0" y="18.4" width="1.0" height="1.300" fill="#808080"/><rect x="9.0" y="18.4" width="11.8" height="1.300" fill="#d4d4d4"/><rect x="20.8" y="18.4" width="2.0" height="1.300" fill="#ffd700"/><rect x="22.8" y="18.4" width="7.0" height="1.300" fill="#9cdcfe"/><rect x="29.8" y="18.4" width="2.0" height="1.300" fill="#ffd700"/><rect x="31.8" y="18.4" width="2.0" height="1.300" fill="#808080"/><rect x="33.8" y="18.4" width="1.0" height="1.300" fill="#569cd6"/><rect x="34.8" y="18.4" width="1.0" height="1.300" fill="#808080"/><rect x="6.0" y="20.4" width="1.0" height="1.300" fill="#808080"/><rect x="7.0" y="20.4" width="1.0" height="1.300" fill="#569cd6"/><rect x="8.0" y="20.4" width="1.0" height="1.300" fill="#808080"/><rect x="9.0" y="20.4" width="11.4" height="1.300" fill="#d4d4d4"/><rect x="20.4" y="20.4" width="2.0" height="1.300" fill="#ffd700"/><rect x="22.4" y="20.4" width="7.0" height="1.300" fill="#9cdcfe"/><rect x="29.4" y="20.4" width="1.0" height="1.300" fill="#d4d4d4"/><rect x="30.4" y="20.4" width="5.0" height="1.300" fill="#dcdcaa"/><rect x="35.4" y="20.4" width="1.0" height="1.300" fill="#da70d6"/><rect x="36.4" y="20.4" width="1.0" height="1.300" fill="#ce9178"/><rect x="38.4" y="20.4" width="1.0" height="1.300" fill="#ce9178"/><rect x="39.4" y="20.4" width="1.0" height="1.300" fill="#da70d6"/><rect x="40.4" y="20.4" width="1.0" height="1.300" fill="#d4d4d4"/><rect x="41.4" y="20.4" width="7.0" height="1.300" fill="#dcdcaa"/><rect x="48.4" y="20.4" width="2.0" height="1.300" fill="#da70d6"/><rect x="50.4" y="20.4" width="2.0" height="1.300" fill="#ffd700"/><rect x="52.4" y="20.4" width="2.0" height="1.300" fill="#808080"/><rect x="54.4" y="20.4" width="1.0" height="1.300" fill="#569cd6"/><rect x="55.4" y="20.4" width="1.0" height="1.300" fill="#808080"/><rect x="4.0" y="22.4" width="2.0" height="1.300" fill="#808080"/><rect x="6.0" y="22.4" width="3.0" height="1.300" fill="#569cd6"/><rect x="9.0" y="22.4" width="1.0" height="1.300" fill="#808080"/><rect x="0.0" y="24.4" width="2.0" height="1.300" fill="#808080"/><rect x="2.0" y="24.4" width="8.0" height="1.300" fill="#569cd6"/><rect x="10.0" y="24.4" width="1.0" height="1.300" fill="#808080"/><rect x="0.0" y="26.4" width="1.0" height="1.300" fill="#808080"/><rect x="1.0" y="26.4" width="6.0" height="1.300" fill="#569cd6"/><rect x="8.0" y="26.4" width="5.0" height="1.300" fill="#9cdcfe"/><rect x="14.0" y="26.4" width="4.0" height="1.300" fill="#9cdcfe"/><rect x="18.0" y="26.4" width="1.0" height="1.300" fill="#d4d4d4"/><rect x="19.0" y="26.4" width="4.0" height="1.300" fill="#ce9178"/><rect x="23.0" y="26.4" width="1.0" height="1.300" fill="#808080"/><rect x="0.0" y="28.4" width="6.0" height="1.300" fill="#c586c0"/><rect x="7.0" y="28.4" width="1.0" height="1.300" fill="#ffd700"/><rect x="9.0" y="28.4" width="8.0" height="1.300" fill="#9cdcfe"/><rect x="17.0" y="28.4" width="1.0" height="1.300" fill="#d4d4d4"/><rect x="19.0" y="28.4" width="3.0" height="1.300" fill="#9cdcfe"/><rect x="23.0" y="28.4" width="1.0" height="1.300" fill="#ffd700"/><rect x="25.0" y="28.4" width="4.0" height="1.300" fill="#c586c0"/><rect x="30.0" y="28.4" width="5.0" height="1.300" fill="#ce9178"/><rect x="35.0" y="28.4" width="1.0" height="1.300" fill="#d4d4d4"/><rect x="0.0" y="30.4" width="5.0" height="1.300" fill="#569cd6"/><rect x="6.0" y="30.4" width="11.0" height="1.300" fill="#4fc1ff"/><rect x="17.0" y="30.4" width="1.0" height="1.300" fill="#d4d4d4"/><rect x="18.0" y="30.4" width="3.0" height="1.300" fill="#dcdcaa"/><rect x="21.0" y="30.4" width="1.0" height="1.300" fill="#ffd700"/><rect x="22.0" y="30.4" width="1.0" height="1.300" fill="#da70d6"/><rect x="23.0" y="30.4" width="4.0" height="1.300" fill="#b5cea8"/><rect x="27.0" y="30.4" width="1.0" height="1.300" fill="#d4d4d4"/><rect x="29.0" y="30.4" width="1.0" height="1.300" fill="#d4d4d4"/><rect x="30.0" y="30.4" width="4.0" height="1.300" fill="#b5cea8"/><rect x="34.0" y="30.4" width="1.0" height="1.300" fill="#d4d4d4"/><rect x="36.0" y="30.4" width="4.0" height="1.300" fill="#b5cea8"/><rect x="40.0" y="30.4" width="1.0" height="1.300" fill="#d4d4d4"/><rect x="42.0" y="30.4" width="3.0" height="1.300" fill="#b5cea8"/><rect x="45.0" y="30.4" width="1.0" height="1.300" fill="#d4d4d4"/><rect x="47.0" y="30.4" width="3.0" height="1.300" fill="#b5cea8"/><rect x="50.0" y="30.4" width="1.0" height="1.300" fill="#d4d4d4"/><rect x="52.0" y="30.4" width="3.0" height="1.300" fill="#b5cea8"/><rect x="55.0" y="30.4" width="1.0" height="1.300" fill="#d4d4d4"/><rect x="57.0" y="30.4" width="4.0" height="1.300" fill="#b5cea8"/><rect x="61.0" y="30.4" width="1.0" height="1.300" fill="#da70d6"/><rect x="62.0" y="30.4" width="1.0" height="1.300" fill="#ffd700"/><rect x="0.0" y="32.4" width="5.0" height="1.300" fill="#569cd6"/><rect x="6.0" y="32.4" width="3.0" height="1.300" fill="#4fc1ff"/><rect x="10.0" y="32.4" width="1.0" height="1.300" fill="#d4d4d4"/><rect x="12.0" y="32.4" width="3.0" height="1.300" fill="#dcdcaa"/><rect x="15.0" y="32.4" width="1.0" height="1.300" fill="#ffd700"/><rect x="16.0" y="32.4" width="1.0" height="1.300" fill="#b5cea8"/><rect x="17.0" y="32.4" width="1.0" height="1.300" fill="#ffd700"/><rect x="0.0" y="34.4" width="5.0" height="1.300" fill="#569cd6"/><rect x="6.0" y="34.4" width="7.0" height="1.300" fill="#4fc1ff"/><rect x="14.0" y="34.4" width="1.0" height="1.300" fill="#d4d4d4"/><rect x="16.0" y="34.4" width="3.0" height="1.300" fill="#dcdcaa"/><rect x="19.0" y="34.4" width="1.0" height="1.300" fill="#ffd700"/><rect x="20.0" y="34.4" width="4.0" height="1.300" fill="#ce9178"/><rect x="25.0" y="34.4" width="11.0" height="1.300" fill="#ce9178"/><rect x="37.0" y="34.4" width="10.0" height="1.300" fill="#ce9178"/><rect x="48.0" y="34.4" width="10.0" height="1.300" fill="#ce9178"/><rect x="58.0" y="34.4" width="1.0" height="1.300" fill="#ffd700"/><rect x="0.0" y="36.4" width="5.0" height="1.300" fill="#569cd6"/><rect x="6.0" y="36.4" width="9.0" height="1.300" fill="#4fc1ff"/><rect x="16.0" y="36.4" width="1.0" height="1.300" fill="#d4d4d4"/><rect x="18.0" y="36.4" width="8.0" height="1.300" fill="#dcdcaa"/><rect x="26.0" y="36.4" width="1.0" height="1.300" fill="#ffd700"/><rect x="27.0" y="36.4" width="2.0" height="1.300" fill="#da70d6"/><rect x="29.0" y="36.4" width="2.0" height="1.300" fill="#569cd6"/><rect x="31.0" y="36.4" width="1.0" height="1.300" fill="#da70d6"/><rect x="4.0" y="38.4" width="7.0" height="1.300" fill="#9cdcfe"/><rect x="11.0" y="38.4" width="1.0" height="1.300" fill="#d4d4d4"/><rect x="12.0" y="38.4" width="3.0" height="1.300" fill="#dcdcaa"/><rect x="15.0" y="38.4" width="1.0" height="1.300" fill="#179fff"/><rect x="16.0" y="38.4" width="11.0" height="1.300" fill="#ce9178"/><rect x="27.0" y="38.4" width="1.0" height="1.300" fill="#179fff"/><rect x="28.0" y="38.4" width="1.0" height="1.300" fill="#d4d4d4"/><rect x="4.0" y="40.4" width="6.0" height="1.300" fill="#c586c0"/><rect x="11.0" y="40.4" width="4.0" height="1.300" fill="#9cdcfe"/><rect x="15.0" y="40.4" width="1.0" height="1.300" fill="#d4d4d4"/><rect x="16.0" y="40.4" width="3.0" height="1.300" fill="#dcdcaa"/><rect x="19.0" y="40.4" width="1.0" height="1.300" fill="#179fff"/><rect x="20.0" y="40.4" width="3.0" height="1.300" fill="#d4d4d4"/><rect x="23.0" y="40.4" width="11.0" height="1.300" fill="#4fc1ff"/><rect x="34.0" y="40.4" width="1.0" height="1.300" fill="#d4d4d4"/><rect x="35.0" y="40.4" width="5.0" height="1.300" fill="#d4d4d4"/><rect x="40.0" y="40.4" width="1.0" height="1.300" fill="#179fff"/><rect x="4.0" y="42.4" width="1.0" height="1.300" fill="#da70d6"/><rect x="5.0" y="42.4" width="1.0" height="1.300" fill="#ffd700"/><rect x="0.0" y="44.4" width="5.0" height="1.300" fill="#569cd6"/><rect x="6.0" y="44.4" width="9.0" height="1.300" fill="#dcdcaa"/><rect x="16.0" y="44.4" width="1.0" height="1.300" fill="#d4d4d4"/><rect x="18.0" y="44.4" width="2.0" height="1.300" fill="#ffd700"/><rect x="20.0" y="44.4" width="2.0" height="1.300" fill="#569cd6"/><rect x="22.0" y="44.4" width="1.0" height="1.300" fill="#ffd700"/><rect x="4.0" y="46.4" width="7.0" height="1.300" fill="#9cdcfe"/><rect x="11.0" y="46.4" width="1.0" height="1.300" fill="#d4d4d4"/><rect x="12.0" y="46.4" width="3.0" height="1.300" fill="#dcdcaa"/><rect x="15.0" y="46.4" width="1.0" height="1.300" fill="#da70d6"/><rect x="16.0" y="46.4" width="11.0" height="1.300" fill="#ce9178"/><rect x="27.0" y="46.4" width="1.0" height="1.300" fill="#da70d6"/><rect x="28.0" y="46.4" width="1.0" height="1.300" fill="#d4d4d4"/><rect x="4.0" y="48.4" width="6.0" height="1.300" fill="#c586c0"/><rect x="11.0" y="48.4" width="4.0" height="1.300" fill="#9cdcfe"/><rect x="15.0" y="48.4" width="1.0" height="1.300" fill="#d4d4d4"/><rect x="16.0" y="48.4" width="3.0" height="1.300" fill="#dcdcaa"/><rect x="19.0" y="48.4" width="1.0" height="1.300" fill="#da70d6"/><rect x="20.0" y="48.4" width="3.0" height="1.300" fill="#d4d4d4"/><rect x="23.0" y="48.4" width="11.0" height="1.300" fill="#4fc1ff"/><rect x="34.0" y="48.4" width="1.0" height="1.300" fill="#d4d4d4"/><rect x="35.0" y="48.4" width="5.0" height="1.300" fill="#d4d4d4"/><rect x="40.0" y="48.4" width="1.0" height="1.300" fill="#da70d6"/><rect x="0.0" y="50.4" width="1.0" height="1.300" fill="#ffd700"/><rect x="0.0" y="52.4" width="5.0" height="1.300" fill="#569cd6"/><rect x="6.0" y="52.4" width="13.0" height="1.300" fill="#dcdcaa"/><rect x="20.0" y="52.4" width="1.0" height="1.300" fill="#d4d4d4"/><rect x="22.0" y="52.4" width="2.0" height="1.300" fill="#ffd700"/><rect x="25.0" y="52.4" width="2.0" height="1.300" fill="#569cd6"/><rect x="28.0" y="52.4" width="1.0" height="1.300" fill="#ffd700"/><rect x="4.0" y="54.4" width="7.0" height="1.300" fill="#9cdcfe"/><rect x="11.0" y="54.4" width="1.0" height="1.300" fill="#d4d4d4"/><rect x="12.0" y="54.4" width="3.0" height="1.300" fill="#dcdcaa"/><rect x="15.0" y="54.4" width="1.0" height="1.300" fill="#da70d6"/><rect x="16.0" y="54.4" width="15.0" height="1.300" fill="#ce9178"/><rect x="31.0" y="54.4" width="1.0" height="1.300" fill="#da70d6"/><rect x="32.0" y="54.4" width="1.0" height="1.300" fill="#d4d4d4"/><rect x="4.0" y="56.4" width="3.0" height="1.300" fill="#4fc1ff"/><rect x="7.0" y="56.4" width="1.0" height="1.300" fill="#d4d4d4"/><rect x="8.0" y="56.4" width="5.0" height="1.300" fill="#d4d4d4"/><rect x="14.0" y="56.4" width="1.0" height="1.300" fill="#d4d4d4"/><rect x="16.0" y="56.4" width="4.0" height="1.300" fill="#9cdcfe"/><rect x="20.0" y="56.4" width="1.0" height="1.300" fill="#d4d4d4"/><rect x="21.0" y="56.4" width="3.0" height="1.300" fill="#dcdcaa"/><rect x="24.0" y="56.4" width="1.0" height="1.300" fill="#da70d6"/><rect x="25.0" y="56.4" width="3.0" height="1.300" fill="#d4d4d4"/><rect x="28.0" y="56.4" width="11.0" height="1.300" fill="#4fc1ff"/><rect x="39.0" y="56.4" width="1.0" height="1.300" fill="#d4d4d4"/><rect x="40.0" y="56.4" width="5.0" height="1.300" fill="#d4d4d4"/><rect x="45.0" y="56.4" width="1.0" height="1.300" fill="#da70d6"/><rect x="0.0" y="58.4" width="1.0" height="1.300" fill="#ffd700"/><rect x="0.0" y="62.4" width="2.0" height="1.300" fill="#808080"/><rect x="2.0" y="62.4" width="6.0" height="1.300" fill="#569cd6"/><rect x="8.0" y="62.4" width="1.0" height="1.300" fill="#808080"/><rect x="0.0" y="64.4" width="1.0" height="1.300" fill="#808080"/><rect x="1.0" y="64.4" width="5.0" height="1.300" fill="#569cd6"/><rect x="7.0" y="64.4" width="6.0" height="1.300" fill="#9cdcfe"/><rect x="13.0" y="64.4" width="1.0" height="1.300" fill="#808080"/><rect x="0.0" y="68.4" width="2.0" height="1.300" fill="#808080"/><rect x="2.0" y="68.4" width="5.0" height="1.300" fill="#569cd6"/><rect x="7.0" y="68.4" width="1.0" height="1.300" fill="#808080"/></svg>
<svg style="left:1836px;top:92px" width="69" height="72" viewBox="0 0 69 72" opacity=".4"><rect x="0.0" y="0.4" width="1.0" height="1.300" fill="#808080"/><rect x="1.0" y="0.4" width="8.0" height="1.300" fill="#569cd6"/><rect x="9.0" y="0.4" width="1.0" height="1.300" fill="#808080"/><rect x="4.0" y="2.4" width="1.0" height="1.300" fill="#808080"/><rect x="5.0" y="2.4" width="2.0" height="1.300" fill="#569cd6"/><rect x="7.0" y="2.4" width="1.0" height="1.300" fill="#808080"/><rect x="8.0" y="2.4" width="13.3" height="1.300" fill="#d4d4d4"/><rect x="21.3" y="2.4" width="2.0" height="1.300" fill="#808080"/><rect x="23.3" y="2.4" width="2.0" height="1.300" fill="#569cd6"/><rect x="25.3" y="2.4" width="1.0" height="1.300" fill="#808080"/><rect x="4.0" y="4.4" width="1.0" height="1.300" fill="#808080"/><rect x="5.0" y="4.4" width="3.0" height="1.300" fill="#569cd6"/><rect x="9.0" y="4.4" width="1.0" height="1.300" fill="#808080"/><rect x="6.0" y="6.4" width="1.0" height="1.300" fill="#808080"/><rect x="7.0" y="6.4" width="1.0" height="1.300" fill="#569cd6"/><rect x="8.0" y="6.4" width="1.0" height="1.300" fill="#808080"/><rect x="9.0" y="6.4" width="11.4" height="1.300" fill="#d4d4d4"/><rect x="20.4" y="6.4" width="2.0" height="1.300" fill="#ffd700"/><rect x="22.4" y="6.4" width="11.0" height="1.300" fill="#9cdcfe"/><rect x="33.4" y="6.4" width="2.0" height="1.300" fill="#ffd700"/><rect x="35.4" y="6.4" width="2.0" height="1.300" fill="#808080"/><rect x="37.4" y="6.4" width="1.0" height="1.300" fill="#569cd6"/><rect x="38.4" y="6.4" width="1.0" height="1.300" fill="#808080"/><rect x="6.0" y="8.4" width="1.0" height="1.300" fill="#808080"/><rect x="7.0" y="8.4" width="1.0" height="1.300" fill="#569cd6"/><rect x="8.0" y="8.4" width="1.0" height="1.300" fill="#808080"/><rect x="9.0" y="8.4" width="15.2" height="1.300" fill="#d4d4d4"/><rect x="24.2" y="8.4" width="2.0" height="1.300" fill="#ffd700"/><rect x="26.2" y="8.4" width="9.0" height="1.300" fill="#9cdcfe"/><rect x="35.2" y="8.4" width="2.0" height="1.300" fill="#ffd700"/><rect x="37.2" y="8.4" width="2.0" height="1.300" fill="#808080"/><rect x="39.2" y="8.4" width="1.0" height="1.300" fill="#569cd6"/><rect x="40.2" y="8.4" width="1.0" height="1.300" fill="#808080"/><rect x="6.0" y="10.4" width="4.0" height="1.300" fill="#6a9955"/><rect x="11.0" y="10.4" width="35.2" height="1.300" fill="#6a9955"/><rect x="47.2" y="10.4" width="3.0" height="1.300" fill="#6a9955"/><rect x="6.0" y="12.4" width="1.0" height="1.300" fill="#808080"/><rect x="7.0" y="12.4" width="1.0" height="1.300" fill="#569cd6"/><rect x="8.0" y="12.4" width="1.0" height="1.300" fill="#808080"/><rect x="9.0" y="12.4" width="1.0" height="1.300" fill="#808080"/><rect x="10.0" y="12.4" width="4.0" height="1.300" fill="#569cd6"/><rect x="14.0" y="12.4" width="1.0" height="1.300" fill="#808080"/><rect x="15.0" y="12.4" width="20.9" height="1.300" fill="#d4d4d4"/><rect x="35.9" y="12.4" width="2.0" height="1.300" fill="#ffd700"/><rect x="37.9" y="12.4" width="3.0" height="1.300" fill="#9cdcfe"/><rect x="40.9" y="12.4" width="2.0" height="1.300" fill="#ffd700"/><rect x="42.9" y="12.4" width="2.0" height="1.300" fill="#808080"/><rect x="44.9" y="12.4" width="4.0" height="1.300" fill="#569cd6"/><rect x="48.9" y="12.4" width="1.0" height="1.300" fill="#808080"/><rect x="49.9" y="12.4" width="1.0" height="1.300" fill="#808080"/><rect x="50.9" y="12.4" width="6.0" height="1.300" fill="#569cd6"/><rect x="57.9" y="12.4" width="10.0" height="1.300" fill="#9cdcfe"/><rect x="67.9" y="12.4" width="1.1" height="1.300" fill="#d4d4d4"/><rect x="6.0" y="14.4" width="1.0" height="1.300" fill="#808080"/><rect x="7.0" y="14.4" width="1.0" height="1.300" fill="#569cd6"/><rect x="8.0" y="14.4" width="1.0" height="1.300" fill="#808080"/><rect x="9.0" y="14.4" width="20.9" height="1.300" fill="#d4d4d4"/><rect x="29.9" y="14.4" width="2.0" height="1.300" fill="#ffd700"/><rect x="31.9" y="14.4" width="9.0" height="1.300" fill="#dcdcaa"/><rect x="40.9" y="14.4" width="2.0" height="1.300" fill="#da70d6"/><rect x="42.9" y="14.4" width="2.0" height="1.300" fill="#ffd700"/><rect x="44.9" y="14.4" width="2.0" height="1.300" fill="#808080"/><rect x="46.9" y="14.4" width="1.0" height="1.300" fill="#569cd6"/><rect x="47.9" y="14.4" width="1.0" height="1.300" fill="#808080"/><rect x="6.0" y="16.4" width="4.0" height="1.300" fill="#6a9955"/><rect x="11.0" y="16.4" width="42.9" height="1.300" fill="#6a9955"/><rect x="54.9" y="16.4" width="3.0" height="1.300" fill="#6a9955"/><rect x="6.0" y="18.4" width="1.0" height="1.300" fill="#808080"/><rect x="7.0" y="18.4" width="1.0" height="1.300" fill="#569cd6"/><rect x="8.0" y="18.4" width="1.0" height="1.300" fill="#808080"/><rect x="9.0" y="18.4" width="11.8" height="1.300" fill="#d4d4d4"/><rect x="20.8" y="18.4" width="2.0" height="1.300" fill="#ffd700"/><rect x="22.8" y="18.4" width="7.0" height="1.300" fill="#9cdcfe"/><rect x="29.8" y="18.4" width="2.0" height="1.300" fill="#ffd700"/><rect x="31.8" y="18.4" width="2.0" height="1.300" fill="#808080"/><rect x="33.8" y="18.4" width="1.0" height="1.300" fill="#569cd6"/><rect x="34.8" y="18.4" width="1.0" height="1.300" fill="#808080"/><rect x="6.0" y="20.4" width="1.0" height="1.300" fill="#808080"/><rect x="7.0" y="20.4" width="1.0" height="1.300" fill="#569cd6"/><rect x="8.0" y="20.4" width="1.0" height="1.300" fill="#808080"/><rect x="9.0" y="20.4" width="11.4" height="1.300" fill="#d4d4d4"/><rect x="20.4" y="20.4" width="2.0" height="1.300" fill="#ffd700"/><rect x="22.4" y="20.4" width="7.0" height="1.300" fill="#9cdcfe"/><rect x="29.4" y="20.4" width="1.0" height="1.300" fill="#d4d4d4"/><rect x="30.4" y="20.4" width="5.0" height="1.300" fill="#dcdcaa"/><rect x="35.4" y="20.4" width="1.0" height="1.300" fill="#da70d6"/><rect x="36.4" y="20.4" width="1.0" height="1.300" fill="#ce9178"/><rect x="38.4" y="20.4" width="1.0" height="1.300" fill="#ce9178"/><rect x="39.4" y="20.4" width="1.0" height="1.300" fill="#da70d6"/><rect x="40.4" y="20.4" width="1.0" height="1.300" fill="#d4d4d4"/><rect x="41.4" y="20.4" width="7.0" height="1.300" fill="#dcdcaa"/><rect x="48.4" y="20.4" width="2.0" height="1.300" fill="#da70d6"/><rect x="50.4" y="20.4" width="2.0" height="1.300" fill="#ffd700"/><rect x="52.4" y="20.4" width="2.0" height="1.300" fill="#808080"/><rect x="54.4" y="20.4" width="1.0" height="1.300" fill="#569cd6"/><rect x="55.4" y="20.4" width="1.0" height="1.300" fill="#808080"/><rect x="4.0" y="22.4" width="2.0" height="1.300" fill="#808080"/><rect x="6.0" y="22.4" width="3.0" height="1.300" fill="#569cd6"/><rect x="9.0" y="22.4" width="1.0" height="1.300" fill="#808080"/><rect x="0.0" y="24.4" width="2.0" height="1.300" fill="#808080"/><rect x="2.0" y="24.4" width="8.0" height="1.300" fill="#569cd6"/><rect x="10.0" y="24.4" width="1.0" height="1.300" fill="#808080"/><rect x="0.0" y="26.4" width="1.0" height="1.300" fill="#808080"/><rect x="1.0" y="26.4" width="6.0" height="1.300" fill="#569cd6"/><rect x="8.0" y="26.4" width="5.0" height="1.300" fill="#9cdcfe"/><rect x="14.0" y="26.4" width="4.0" height="1.300" fill="#9cdcfe"/><rect x="18.0" y="26.4" width="1.0" height="1.300" fill="#d4d4d4"/><rect x="19.0" y="26.4" width="4.0" height="1.300" fill="#ce9178"/><rect x="23.0" y="26.4" width="1.0" height="1.300" fill="#808080"/><rect x="0.0" y="28.4" width="6.0" height="1.300" fill="#c586c0"/><rect x="7.0" y="28.4" width="1.0" height="1.300" fill="#ffd700"/><rect x="9.0" y="28.4" width="8.0" height="1.300" fill="#9cdcfe"/><rect x="17.0" y="28.4" width="1.0" height="1.300" fill="#d4d4d4"/><rect x="19.0" y="28.4" width="3.0" height="1.300" fill="#9cdcfe"/><rect x="23.0" y="28.4" width="1.0" height="1.300" fill="#ffd700"/><rect x="25.0" y="28.4" width="4.0" height="1.300" fill="#c586c0"/><rect x="30.0" y="28.4" width="5.0" height="1.300" fill="#ce9178"/><rect x="35.0" y="28.4" width="1.0" height="1.300" fill="#d4d4d4"/><rect x="0.0" y="30.4" width="5.0" height="1.300" fill="#569cd6"/><rect x="6.0" y="30.4" width="11.0" height="1.300" fill="#4fc1ff"/><rect x="17.0" y="30.4" width="1.0" height="1.300" fill="#d4d4d4"/><rect x="18.0" y="30.4" width="3.0" height="1.300" fill="#dcdcaa"/><rect x="21.0" y="30.4" width="1.0" height="1.300" fill="#ffd700"/><rect x="22.0" y="30.4" width="1.0" height="1.300" fill="#da70d6"/><rect x="23.0" y="30.4" width="4.0" height="1.300" fill="#b5cea8"/><rect x="27.0" y="30.4" width="1.0" height="1.300" fill="#d4d4d4"/><rect x="29.0" y="30.4" width="1.0" height="1.300" fill="#d4d4d4"/><rect x="30.0" y="30.4" width="4.0" height="1.300" fill="#b5cea8"/><rect x="34.0" y="30.4" width="1.0" height="1.300" fill="#d4d4d4"/><rect x="36.0" y="30.4" width="4.0" height="1.300" fill="#b5cea8"/><rect x="40.0" y="30.4" width="1.0" height="1.300" fill="#d4d4d4"/><rect x="42.0" y="30.4" width="3.0" height="1.300" fill="#b5cea8"/><rect x="45.0" y="30.4" width="1.0" height="1.300" fill="#d4d4d4"/><rect x="47.0" y="30.4" width="3.0" height="1.300" fill="#b5cea8"/><rect x="50.0" y="30.4" width="1.0" height="1.300" fill="#d4d4d4"/><rect x="52.0" y="30.4" width="3.0" height="1.300" fill="#b5cea8"/><rect x="55.0" y="30.4" width="1.0" height="1.300" fill="#d4d4d4"/><rect x="57.0" y="30.4" width="4.0" height="1.300" fill="#b5cea8"/><rect x="61.0" y="30.4" width="1.0" height="1.300" fill="#da70d6"/><rect x="62.0" y="30.4" width="1.0" height="1.300" fill="#ffd700"/><rect x="0.0" y="32.4" width="5.0" height="1.300" fill="#569cd6"/><rect x="6.0" y="32.4" width="3.0" height="1.300" fill="#4fc1ff"/><rect x="10.0" y="32.4" width="1.0" height="1.300" fill="#d4d4d4"/><rect x="12.0" y="32.4" width="3.0" height="1.300" fill="#dcdcaa"/><rect x="15.0" y="32.4" width="1.0" height="1.300" fill="#ffd700"/><rect x="16.0" y="32.4" width="1.0" height="1.300" fill="#b5cea8"/><rect x="17.0" y="32.4" width="1.0" height="1.300" fill="#ffd700"/><rect x="0.0" y="34.4" width="5.0" height="1.300" fill="#569cd6"/><rect x="6.0" y="34.4" width="7.0" height="1.300" fill="#4fc1ff"/><rect x="14.0" y="34.4" width="1.0" height="1.300" fill="#d4d4d4"/><rect x="16.0" y="34.4" width="3.0" height="1.300" fill="#dcdcaa"/><rect x="19.0" y="34.4" width="1.0" height="1.300" fill="#ffd700"/><rect x="20.0" y="34.4" width="4.0" height="1.300" fill="#ce9178"/><rect x="25.0" y="34.4" width="11.0" height="1.300" fill="#ce9178"/><rect x="37.0" y="34.4" width="10.0" height="1.300" fill="#ce9178"/><rect x="48.0" y="34.4" width="10.0" height="1.300" fill="#ce9178"/><rect x="58.0" y="34.4" width="1.0" height="1.300" fill="#ffd700"/><rect x="0.0" y="36.4" width="5.0" height="1.300" fill="#569cd6"/><rect x="6.0" y="36.4" width="9.0" height="1.300" fill="#4fc1ff"/><rect x="16.0" y="36.4" width="1.0" height="1.300" fill="#d4d4d4"/><rect x="18.0" y="36.4" width="8.0" height="1.300" fill="#dcdcaa"/><rect x="26.0" y="36.4" width="1.0" height="1.300" fill="#ffd700"/><rect x="27.0" y="36.4" width="2.0" height="1.300" fill="#da70d6"/><rect x="29.0" y="36.4" width="2.0" height="1.300" fill="#569cd6"/><rect x="31.0" y="36.4" width="1.0" height="1.300" fill="#da70d6"/><rect x="4.0" y="38.4" width="7.0" height="1.300" fill="#9cdcfe"/><rect x="11.0" y="38.4" width="1.0" height="1.300" fill="#d4d4d4"/><rect x="12.0" y="38.4" width="3.0" height="1.300" fill="#dcdcaa"/><rect x="15.0" y="38.4" width="1.0" height="1.300" fill="#179fff"/><rect x="16.0" y="38.4" width="11.0" height="1.300" fill="#ce9178"/><rect x="27.0" y="38.4" width="1.0" height="1.300" fill="#179fff"/><rect x="28.0" y="38.4" width="1.0" height="1.300" fill="#d4d4d4"/><rect x="4.0" y="40.4" width="6.0" height="1.300" fill="#c586c0"/><rect x="11.0" y="40.4" width="4.0" height="1.300" fill="#9cdcfe"/><rect x="15.0" y="40.4" width="1.0" height="1.300" fill="#d4d4d4"/><rect x="16.0" y="40.4" width="3.0" height="1.300" fill="#dcdcaa"/><rect x="19.0" y="40.4" width="1.0" height="1.300" fill="#179fff"/><rect x="20.0" y="40.4" width="3.0" height="1.300" fill="#d4d4d4"/><rect x="23.0" y="40.4" width="11.0" height="1.300" fill="#4fc1ff"/><rect x="34.0" y="40.4" width="1.0" height="1.300" fill="#d4d4d4"/><rect x="35.0" y="40.4" width="5.0" height="1.300" fill="#d4d4d4"/><rect x="40.0" y="40.4" width="1.0" height="1.300" fill="#179fff"/><rect x="4.0" y="42.4" width="1.0" height="1.300" fill="#da70d6"/><rect x="5.0" y="42.4" width="1.0" height="1.300" fill="#ffd700"/><rect x="0.0" y="44.4" width="5.0" height="1.300" fill="#569cd6"/><rect x="6.0" y="44.4" width="9.0" height="1.300" fill="#dcdcaa"/><rect x="16.0" y="44.4" width="1.0" height="1.300" fill="#d4d4d4"/><rect x="18.0" y="44.4" width="2.0" height="1.300" fill="#ffd700"/><rect x="20.0" y="44.4" width="2.0" height="1.300" fill="#569cd6"/><rect x="22.0" y="44.4" width="1.0" height="1.300" fill="#ffd700"/><rect x="4.0" y="46.4" width="7.0" height="1.300" fill="#9cdcfe"/><rect x="11.0" y="46.4" width="1.0" height="1.300" fill="#d4d4d4"/><rect x="12.0" y="46.4" width="3.0" height="1.300" fill="#dcdcaa"/><rect x="15.0" y="46.4" width="1.0" height="1.300" fill="#da70d6"/><rect x="16.0" y="46.4" width="11.0" height="1.300" fill="#ce9178"/><rect x="27.0" y="46.4" width="1.0" height="1.300" fill="#da70d6"/><rect x="28.0" y="46.4" width="1.0" height="1.300" fill="#d4d4d4"/><rect x="4.0" y="48.4" width="6.0" height="1.300" fill="#c586c0"/><rect x="11.0" y="48.4" width="4.0" height="1.300" fill="#9cdcfe"/><rect x="15.0" y="48.4" width="1.0" height="1.300" fill="#d4d4d4"/><rect x="16.0" y="48.4" width="3.0" height="1.300" fill="#dcdcaa"/><rect x="19.0" y="48.4" width="1.0" height="1.300" fill="#da70d6"/><rect x="20.0" y="48.4" width="3.0" height="1.300" fill="#d4d4d4"/><rect x="23.0" y="48.4" width="11.0" height="1.300" fill="#4fc1ff"/><rect x="34.0" y="48.4" width="1.0" height="1.300" fill="#d4d4d4"/><rect x="35.0" y="48.4" width="5.0" height="1.300" fill="#d4d4d4"/><rect x="40.0" y="48.4" width="1.0" height="1.300" fill="#da70d6"/><rect x="0.0" y="50.4" width="1.0" height="1.300" fill="#ffd700"/><rect x="0.0" y="52.4" width="5.0" height="1.300" fill="#569cd6"/><rect x="6.0" y="52.4" width="13.0" height="1.300" fill="#dcdcaa"/><rect x="20.0" y="52.4" width="1.0" height="1.300" fill="#d4d4d4"/><rect x="22.0" y="52.4" width="2.0" height="1.300" fill="#ffd700"/><rect x="25.0" y="52.4" width="2.0" height="1.300" fill="#569cd6"/><rect x="28.0" y="52.4" width="1.0" height="1.300" fill="#ffd700"/><rect x="4.0" y="54.4" width="7.0" height="1.300" fill="#9cdcfe"/><rect x="11.0" y="54.4" width="1.0" height="1.300" fill="#d4d4d4"/><rect x="12.0" y="54.4" width="3.0" height="1.300" fill="#dcdcaa"/><rect x="15.0" y="54.4" width="1.0" height="1.300" fill="#da70d6"/><rect x="16.0" y="54.4" width="15.0" height="1.300" fill="#ce9178"/><rect x="31.0" y="54.4" width="1.0" height="1.300" fill="#da70d6"/><rect x="32.0" y="54.4" width="1.0" height="1.300" fill="#d4d4d4"/><rect x="4.0" y="56.4" width="3.0" height="1.300" fill="#4fc1ff"/><rect x="7.0" y="56.4" width="1.0" height="1.300" fill="#d4d4d4"/><rect x="8.0" y="56.4" width="5.0" height="1.300" fill="#d4d4d4"/><rect x="14.0" y="56.4" width="1.0" height="1.300" fill="#d4d4d4"/><rect x="16.0" y="56.4" width="4.0" height="1.300" fill="#9cdcfe"/><rect x="20.0" y="56.4" width="1.0" height="1.300" fill="#d4d4d4"/><rect x="21.0" y="56.4" width="3.0" height="1.300" fill="#dcdcaa"/><rect x="24.0" y="56.4" width="1.0" height="1.300" fill="#da70d6"/><rect x="25.0" y="56.4" width="3.0" height="1.300" fill="#d4d4d4"/><rect x="28.0" y="56.4" width="11.0" height="1.300" fill="#4fc1ff"/><rect x="39.0" y="56.4" width="1.0" height="1.300" fill="#d4d4d4"/><rect x="40.0" y="56.4" width="5.0" height="1.300" fill="#d4d4d4"/><rect x="45.0" y="56.4" width="1.0" height="1.300" fill="#da70d6"/><rect x="0.0" y="58.4" width="1.0" height="1.300" fill="#ffd700"/><rect x="0.0" y="62.4" width="2.0" height="1.300" fill="#808080"/><rect x="2.0" y="62.4" width="6.0" height="1.300" fill="#569cd6"/><rect x="8.0" y="62.4" width="1.0" height="1.300" fill="#808080"/><rect x="0.0" y="64.4" width="1.0" height="1.300" fill="#808080"/><rect x="1.0" y="64.4" width="5.0" height="1.300" fill="#569cd6"/><rect x="7.0" y="64.4" width="6.0" height="1.300" fill="#9cdcfe"/><rect x="13.0" y="64.4" width="1.0" height="1.300" fill="#808080"/><rect x="0.0" y="68.4" width="2.0" height="1.300" fill="#808080"/><rect x="2.0" y="68.4" width="5.0" height="1.300" fill="#569cd6"/><rect x="7.0" y="68.4" width="1.0" height="1.300" fill="#808080"/></svg>
<div style="left:48px;top:806px;width:1872px;height:212px;background:#181818;border-top:1px solid #2b2b2b;"></div>
<span class="x" style="left:68px;top:817.0px;height:16px;line-height:16px;font-size:11px;color:#9d9d9d;letter-spacing:-0.930px;">PROBLEMS</span>
<span class="x" style="left:145.5px;top:817.0px;height:16px;line-height:16px;font-size:11px;color:#9d9d9d;letter-spacing:-0.672px;">OUTPUT</span>
<span class="x" style="left:211px;top:817.0px;height:16px;line-height:16px;font-size:11px;color:#9d9d9d;letter-spacing:-0.844px;">DEBUG CONSOLE</span>
<span class="x" style="left:320.5px;top:817.0px;height:16px;line-height:16px;font-size:11px;color:#e7e7e7;letter-spacing:-0.553px;">TERMINAL</span>
<span class="x" style="left:396px;top:817.0px;height:16px;line-height:16px;font-size:11px;color:#9d9d9d;letter-spacing:-1.241px;">PORTS</span>
<div style="left:318px;top:835px;width:56px;height:1px;background:#0078d4;"></div>
<span class="x" style="left:68px;top:847.5px;height:19px;line-height:19px;font-size:12.5px;color:#cccccc;font-family:'Liberation Mono','Noto Sans CJK SC',monospace;letter-spacing:-0.508px;-webkit-text-stroke:.2px;">15:07:12 <b style="color:#29b8db">[vite]</b> <span style="color:#7a7a7a">(client)</span> <span style="color:#23d18b">page reload</span> <span style="color:#b4b4b4">src/main.ts</span></span>
<div style="left:68px;top:866px;width:7px;height:15.5px;background:transparent;border:1px solid #cccccc;"></div>
<svg style="left:1801px;top:818px" width="14" height="14" viewBox="0 0 14 14" fill="none" stroke="#cccccc" stroke-width="1.2"><path d="M7 1v12M1 7h12"/></svg>
<svg style="left:1819px;top:821px" width="10" height="8" viewBox="0 0 10 8" fill="none" stroke="#cccccc" stroke-width="1.1"><path d="M1 2l4 4 4-4"/></svg>
<div style="left:1840px;top:824px;width:2px;height:2px;background:#cccccc;border-radius:1px;"></div>
<div style="left:1845px;top:824px;width:2px;height:2px;background:#cccccc;border-radius:1px;"></div>
<div style="left:1850px;top:824px;width:2px;height:2px;background:#cccccc;border-radius:1px;"></div>
<svg style="left:1865px;top:819px" width="12" height="10" viewBox="0 0 12 10" fill="none" stroke="#cccccc" stroke-width="1.2"><path d="M1 7.500 6 2.500l5 5"/></svg>
<svg style="left:1892px;top:819px" width="11" height="11" viewBox="0 0 11 11" fill="none" stroke="#cccccc" stroke-width="1.2"><path d="M1 1l9 9M10 1 1 10"/></svg>
<div style="left:1787px;top:848px;width:1px;height:170px;background:#0a0a0a;"></div>
<div style="left:1788px;top:848px;width:4px;height:3px;background:#5a5a5a;"></div>
<div style="left:1801px;top:841px;width:119px;height:177px;background:#181818;border-left:1px solid #2b2b2b;"></div>
<div style="left:1801px;top:841px;width:119px;height:22px;background:#393939;border-left:1px solid #0078d4;"></div>
<svg style="left:1811px;top:845px" width="16" height="14" viewBox="0 0 16 14" fill="none" stroke="#c5c5c5" stroke-width="1.1"><path d="M2.300.8h13l-1.600 12.400H.7z"/><path d="M4.500 4l3 2.800-3.600 2.600M8.500 9.800h3"/></svg>
<svg style="left:1811px;top:868px" width="16" height="14" viewBox="0 0 16 14" fill="none" stroke="#c5c5c5" stroke-width="1.1"><path d="M2.300.8h13l-1.600 12.400H.7z"/><path d="M4.500 4l3 2.800-3.600 2.600M8.500 9.800h3"/></svg>
<span class="x" style="left:1830.8px;top:842.0px;height:20px;line-height:20px;font-size:13px;color:#e0e0e0;letter-spacing:-0.058px;">esbuild</span>
<span class="x" style="left:1830.8px;top:865.0px;height:20px;line-height:20px;font-size:13px;color:#cccccc;letter-spacing:-0.056px;">powershell</span>
<div style="left:0px;top:1018px;width:1920px;height:22px;background:#181818;border-top:1px solid #2b2b2b;"></div>
<div style="left:0px;top:1018px;width:34px;height:22px;background:#0078d4;"></div>
<svg style="left:10px;top:1020px" width="16" height="18" viewBox="10 1020 16 18" fill="none" stroke="#ffffff" stroke-width="1.2"><path d="M12.900 1026.300l3.800 4.100-3.800 4.200M21.800 1023.100l-3.800 3.800 3.800 3.800"/></svg>
<svg style="left:42px;top:1022.500px" width="14" height="14" viewBox="0 0 14 14" fill="none" stroke="#cccccc" stroke-width="1.1"><circle cx="7" cy="7" r="6"/><path d="M4.500 4.500l5 5M9.500 4.500l-5 5"/></svg>
<span class="x" style="left:59.5px;top:1020.5px;height:18px;line-height:18px;font-size:12px;color:#cccccc;letter-spacing:-0.688px;">0</span>
<svg style="left:69px;top:1022.500px" width="14" height="14" viewBox="0 0 14 14" fill="none" stroke="#cccccc" stroke-width="1.1"><path d="M7 1.500 13 12.500H1z"/><path d="M7 5.500v4M7 10.500v1"/></svg>
<span class="x" style="left:86.5px;top:1020.5px;height:18px;line-height:18px;font-size:12px;color:#cccccc;letter-spacing:-0.188px;">0</span>
<span class="x" style="left:1464.5px;top:1020.5px;height:18px;line-height:18px;font-size:12px;color:#cccccc;letter-spacing:-0.228px;">Ln 21, Col 20 (3 selected)</span>
<span class="x" style="left:1612.5px;top:1020.5px;height:18px;line-height:18px;font-size:12px;color:#cccccc;letter-spacing:-0.542px;">Spaces: 4</span>
<span class="x" style="left:1677px;top:1020.5px;height:18px;line-height:18px;font-size:12px;color:#cccccc;letter-spacing:-0.440px;">UTF-8</span>
<div style="left:1724px;top:1018px;width:196px;height:22px;background:#ffffff;"></div>
<svg style="left:1711px;top:1010px" width="34" height="34" viewBox="0 0 34 34"><g transform="rotate(-14 17 17)"><rect x="5.500" y="5.500" width="23" height="23" rx="3.500" fill="#f4541f"/><text transform="translate(17.500 25.800) scale(1.350 1)" text-anchor="middle" font-family="Liberation Sans,sans-serif" font-weight="bold" font-size="24" fill="#ffffff">S</text></g></svg>
<span class="x" style="left:1748px;top:1019.0px;height:20px;line-height:20px;font-size:13.5px;color:#2277c9;font-weight:bold;">英</span>
<svg style="left:1770px;top:1022px" width="12" height="14" viewBox="0 0 12 14" fill="#2277c9"><circle cx="3.900" cy="3.900" r="1.700"/><circle cx="9.500" cy="6.400" r="1.700"/><path d="M11.200 6.400c0 2.500-1.200 4.200-3.600 5.200 1.300-1.200 1.700-2.200 1.600-3.600z"/></svg>
<svg style="left:1791px;top:1021px" width="16" height="16" viewBox="0 0 16 16" fill="none" stroke="#2277c9" stroke-width="1.500"><circle cx="8" cy="8" r="6.800"/><path d="M4.800 9.500c1.600 2.400 4.800 2.400 6.400 0" stroke-width="1.300"/><path d="M6 5v2.200M10 5v2.200" stroke-width="1.400"/></svg>
<svg style="left:1815px;top:1021px" width="13" height="17" viewBox="0 0 13 17" fill="none" stroke="#2277c9" stroke-width="1.500"><rect x="4" y=".8" width="5" height="9" rx="2.500" fill="#2277c9"/><path d="M1.500 7.500a5 5 0 0 0 10 0M6.500 12.500v3M3.500 15.800h6"/></svg>
<svg style="left:1835px;top:1023px" width="17" height="12" viewBox="0 0 17 12"><rect x=".5" y=".5" width="16" height="11" rx="1.500" fill="#2277c9"/><g fill="#fff"><rect x="2.500" y="2.500" width="1.600" height="1.600"/><rect x="5.200" y="2.500" width="1.600" height="1.600"/><rect x="7.900" y="2.500" width="1.600" height="1.600"/><rect x="10.600" y="2.500" width="1.600" height="1.600"/><rect x="13.200" y="2.500" width="1.600" height="1.600"/><rect x="2.500" y="5.200" width="1.600" height="1.600"/><rect x="5.200" y="5.200" width="1.600" height="1.600"/><rect x="7.900" y="5.200" width="1.600" height="1.600"/><rect x="10.600" y="5.200" width="1.600" height="1.600"/><rect x="13.200" y="5.200" width="1.600" height="1.600"/><rect x="4" y="8" width="9" height="1.600"/></g></svg>
<svg style="left:1859px;top:1021px" width="15" height="17" viewBox="0 0 15 17" fill="#c9c9d2"><circle cx="7" cy="4.500" r="3.300"/><path d="M1 14c0-4 2.500-6 6-6s6 2 6 6z"/><rect x="9.500" y="10.500" width="4" height="5" fill="#fff" stroke="#b5b5c0" stroke-width=".8"/></svg>
<svg style="left:1879px;top:1022px" width="16" height="15" viewBox="0 0 16 15" fill="#2277c9"><path d="M5 .8 1 3 .3 6.500l2.700.8V14.200h10V7.300l2.700-.8L15 3 11 .8c-.7 1.300-1.800 1.900-3 1.900S5.700 2.100 5 .8z"/></svg>
<svg style="left:1901px;top:1022px" width="15" height="15" viewBox="0 0 15 15" fill="#2277c9"><rect x=".5" y=".5" width="6" height="6"/><rect x="8.500" y="1.200" width="5" height="5" fill="none" stroke="#2277c9" stroke-width="1.300"/><rect x=".5" y="8.500" width="6" height="6"/><rect x="8.500" y="8.500" width="6" height="6"/></svg>
<div style="left:0px;top:1040px;width:1920px;height:40px;background:linear-gradient(90deg,#233c46 0%,#223a47 30%,#1e3346 60%,#1a2a47 100%);"></div>
<div style="left:373px;top:1040px;width:160px;height:40px;background:rgba(255,255,255,.2);"></div>
<div style="left:55px;top:1078px;width:152px;height:2px;background:#7fb5de;"></div>
<div style="left:216px;top:1078px;width:152px;height:2px;background:#7fb5de;"></div>
<div style="left:373px;top:1078px;width:160px;height:2px;background:#7fb5de;"></div>
<div style="left:538px;top:1078px;width:152px;height:2px;background:#7fb5de;"></div>
<div style="left:699px;top:1078px;width:152px;height:2px;background:#7fb5de;"></div>
<div style="left:859.5px;top:1078px;width:151.5px;height:2px;background:#7fb5de;"></div>
<svg style="left:16px;top:1052px" width="17" height="16" viewBox="0 0 17 16" fill="#ffffff"><path d="M0 2.300 6.800 1.400v6.200H0zM7.600 1.300 16.500 0v7.600H7.600zM0 8.400h6.800v6.200L0 13.700zM7.600 8.400h8.900V16l-8.900-1.300z"/></svg>
<svg style="left:63px;top:1050px" width="17" height="21" viewBox="0 0 17 21"><path d="M2 1.500h10l1.500 1.500V19l-4 .3-1.200 1.200-1.300-1.200L2 19z" fill="#f7d16b"/><path d="M2 1.500h3.500V19H2z" fill="#e9b845"/><path d="M12 1.500l1.500 1.500V19l-1.500.1z" fill="#f3c555"/></svg>
<span class="x" style="left:88.9px;top:1050.5px;height:18px;line-height:18px;font-size:12px;color:#ffffff;letter-spacing:0.367px;-webkit-text-stroke:.15px;">src</span>
<svg style="left:222.500px;top:1048.500px" width="23" height="23" viewBox="0 0 48 48"><circle cx="24" cy="24" r="22" fill="#fff"/><path d="M24 2a22 22 0 0 1 19.050 11H24a11 11 0 0 0-9.530 5.500L5.950 11A22 22 0 0 1 24 2z" fill="#ea4335"/><path d="M43.050 13A22 22 0 0 1 24 46l9.530-16.500A11 11 0 0 0 33.530 18.500L43.050 13z" fill="#fbbc05"/><path d="M43.050 13H24a11 11 0 0 1 9.530 16.500L24 46a22 22 0 0 0 19.050-33z" fill="#fbbc05"/><path d="M5.950 11l8.520 16.500A11 11 0 0 0 24 35l9.530-5.500L24 46A22 22 0 0 1 5.950 11z" fill="#34a853"/><circle cx="24" cy="24" r="10.500" fill="#fff"/><circle cx="24" cy="24" r="8.500" fill="#4285f4"/></svg>
<span class="x" style="left:250px;top:1050.5px;height:18px;line-height:18px;font-size:12px;color:#ffffff;letter-spacing:0.570px;-webkit-text-stroke:.15px;">Vite App - Googl...</span>
<svg style="left:383px;top:1048px" width="24" height="24" viewBox="0 0 100 100"><path fill="#1378bd" d="M74 3 L34 42 L14 26 L4 32 L22 50 L4 68 L14 74 L34 58 L74 97 L80 80 L48 50 L80 20 Z"/><path fill="#2aa7f3" d="M74 3 L97 14 V86 L74 97 Z"/></svg>
<span class="x" style="left:410.7px;top:1050.5px;height:18px;line-height:18px;font-size:12px;color:#ffffff;letter-spacing:0.141px;-webkit-text-stroke:.15px;">Vue2_4.vue - cha...</span>
<svg style="left:544px;top:1050.500px" width="22" height="19" viewBox="0 0 22 19"><rect width="22" height="19" rx="1" fill="#0c0c0c" stroke="#555" stroke-width=".8"/><rect x=".8" y=".8" width="20.400" height="2.600" fill="#d0d0d0"/><path d="M3 7h4M9 9h8" stroke="#e0e0e0" stroke-width="1.400"/></svg>
<span class="x" style="left:571.7px;top:1050.5px;height:18px;line-height:18px;font-size:12px;color:#ffffff;letter-spacing:0.087px;-webkit-text-stroke:.15px;">选择管理员: C:\Wi...</span>
<svg style="left:706px;top:1048.500px" width="23" height="23" viewBox="0 0 23 23"><rect x="9" y="2.500" width="13" height="18" rx="1" fill="#f4f4f4" stroke="#d04a23" stroke-width="1"/><path d="M12 7h7M12 10h7M12 13h7" stroke="#d04a23" stroke-width="1.600"/><path d="M0 2.500 13 .3v22.400L0 20.500z" fill="#d24726"/><text x="6.500" y="16" text-anchor="middle" font-family="Liberation Sans,sans-serif" font-weight="bold" font-size="11.500" fill="#fff">P</text></svg>
<span class="x" style="left:733.3px;top:1050.5px;height:18px;line-height:18px;font-size:12px;color:#ffffff;letter-spacing:0.116px;-webkit-text-stroke:.15px;">vuejs3.x-第2章Vue...</span>
<svg style="left:866px;top:1048.500px" width="23" height="23" viewBox="0 0 23 23"><rect x="9" y="2.500" width="13" height="18" rx="1" fill="#f4f4f4" stroke="#d04a23" stroke-width="1"/><path d="M12 7h7M12 10h7M12 13h7" stroke="#d04a23" stroke-width="1.600"/><path d="M0 2.500 13 .3v22.400L0 20.500z" fill="#d24726"/><text x="6.500" y="16" text-anchor="middle" font-family="Liberation Sans,sans-serif" font-weight="bold" font-size="11.500" fill="#fff">P</text></svg>
<span class="x" style="left:893.3px;top:1050.5px;height:18px;line-height:18px;font-size:12px;color:#ffffff;letter-spacing:0.199px;-webkit-text-stroke:.15px;">V4.4.1 - PowerPoi...</span>
<svg style="left:1572px;top:1052px" width="16" height="16" viewBox="0 0 16 16"><g fill="#f3a23c"><circle cx="4.500" cy="4.500" r="4"/><circle cx="11.500" cy="4.500" r="4"/><circle cx="4.500" cy="11.500" r="4"/><circle cx="11.500" cy="11.500" r="4"/><rect x="3" y="3" width="10" height="10"/></g><circle cx="8" cy="8" r="4.200" fill="#ee8a1e" stroke="#ffedcf" stroke-width="1.500"/></svg>
<svg style="left:1643px;top:1053px" width="18" height="15" viewBox="0 0 18 15" fill="none" stroke="#ffffff" stroke-width="1.100"><rect x="3.500" y="1.500" width="13" height="8.500"/><path d="M3.500 5.500v8h9.500M10 10v3.500"/><rect x="1.200" y=".8" width="4" height="4" fill="#1d2f46"/><path d="M2.500 2.800h1.500"/></svg>
<svg style="left:1692px;top:1052px" width="18" height="17" viewBox="0 0 18 17"><rect x=".5" y=".5" width="14" height="14" rx="2" fill="#f2f2f2"/><path d="M2.500 11.500c0-5 3-8 6-7.500 2.500.5 3.500 3.500 3 7M5 12c.5-3 2-4.500 3.500-4.500" fill="none" stroke="#3c4a55" stroke-width="1.100"/><circle cx="12.500" cy="11.500" r="4" fill="#5cb85c"/><path d="M11.300 9.500v4l3.200-2z" fill="#fff"/></svg>
<span class="x" style="left:1741px;top:1049.0px;height:21px;line-height:21px;font-size:14px;color:#ffffff;">英</span>
<svg style="left:1767px;top:1051px" width="18" height="18" viewBox="0 0 34 34"><g transform="rotate(-14 17 17)"><rect x="4" y="4" width="26" height="26" rx="3" fill="#e8401c"/><text transform="translate(17.500 26.500) scale(1.300 1)" text-anchor="middle" font-family="Liberation Sans,sans-serif" font-weight="bold" font-size="25" fill="#ffffff">S</text></g></svg>
<span class="x" style="left:1816px;top:1041.5px;height:18px;line-height:18px;font-size:12px;color:#ffffff;letter-spacing:-0.106px;-webkit-text-stroke:.15px;">15:09</span>
<span class="x" style="left:1804.5px;top:1060.5px;height:18px;line-height:18px;font-size:12px;color:#ffffff;letter-spacing:0.535px;-webkit-text-stroke:.15px;">2025/3/3</span>
<svg style="left:1878px;top:1052px" width="18" height="17" viewBox="0 0 18 17" fill="none" stroke="#ffffff" stroke-width="1.100"><path d="M1 1h16v11.500h-5.500L9 15.500l-2.500-3H1z"/></svg>
<div style="left:1916px;top:1040px;width:1px;height:40px;background:#7f8a99;"></div>
</body></html>
